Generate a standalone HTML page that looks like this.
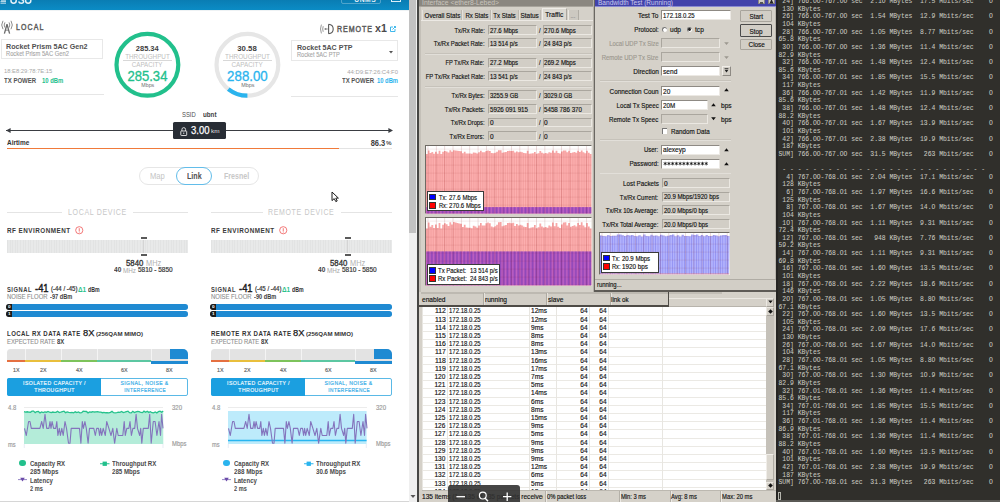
<!DOCTYPE html>
<html><head><meta charset="utf-8"><style>
html,body{margin:0;padding:0;}
body{width:1000px;height:502px;overflow:hidden;position:relative;background:#fff;font-family:"Liberation Sans", sans-serif;}
.t{position:absolute;white-space:pre;line-height:1;}
.r{position:absolute;}
svg.r{overflow:visible;}
</style></head><body>
<div class="r" style="left:0px;top:0px;width:409px;height:502px;background:#ffffff;"></div>
<div class="r" style="left:0px;top:0px;width:409px;height:10px;background:linear-gradient(180deg,#0a7db3 0%,#0b8cc5 100%);"></div>
<div class="r" style="left:0px;top:9.6px;width:409px;height:1.2px;background:#eef2f4;"></div>
<svg class="r" style="left:0;top:0" width="40" height="6" viewBox="0 0 40 6"><path d="M0.5 3.2 H6 M0.5 1.6 H6 M1 0.2 H6" stroke="#d8eaf4" stroke-width="0.9"/><path d="M11 -3 V0.8 Q11 3.2 13.6 3.2 Q16.2 3.2 16.2 0.8 V-3" stroke="#e4f1f8" stroke-width="1.5" fill="none"/><path d="M18.6 1.4 Q19.2 3.2 21.4 3.2 Q23.6 3.2 23.6 1.6 Q23.6 0.2 21.2 -0.6" stroke="#e4f1f8" stroke-width="1.5" fill="none"/><path d="M25.6 -3 V0.8 Q25.6 3.2 28.2 3.2 Q30.8 3.2 30.8 0.8 V-3" stroke="#e4f1f8" stroke-width="1.5" fill="none"/></svg>
<div class="r" style="left:341px;top:-6px;width:40px;height:10.3px;border:0.9px solid rgba(255,255,255,0.28);box-sizing:border-box;border-radius:2px;"></div>
<div class="t" style="left:352.57px;top:-3.78px;font-size:7.49px;color:#e0eef6;font-weight:700;letter-spacing:0.6px;transform:scale(0.8997,1.0000);transform-origin:50% 6.34px;">UNMS</div>
<div class="r" style="left:391px;top:-5px;width:10px;height:7px;border:1px solid #d9eef8;box-sizing:border-box;"></div>
<svg class="r" style="left:0px;top:16px" width="16" height="20" viewBox="0 16 16 20"><path d="M7 24.3 L4.4 33.6 M7 24.3 L9.6 33.6" stroke="#6a6a6a" stroke-width="1.3" fill="none"/><path d="M5.6 30.2 H8.4" stroke="#6a6a6a" stroke-width="0.8"/><path d="M3.0 20.8 Q0.4 25 3.0 29.2 M11.0 20.8 Q13.6 25 11.0 29.2" stroke="#808080" stroke-width="0.9" fill="none"/><path d="M4.9 22.4 Q3.5 25 4.9 27.6 M9.1 22.4 Q10.5 25 9.1 27.6" stroke="#808080" stroke-width="0.9" fill="none"/></svg>
<div class="t" style="left:16.00px;top:24.43px;font-size:8.196200000000001px;color:#5c5c5c;font-weight:400;letter-spacing:1.3px;transform:scale(0.8508,1.0000);transform-origin:0 6.94px;-webkit-text-stroke:0.45px #5c5c5c;">LOCAL</div>
<div class="r" style="left:0.6px;top:38.8px;width:102.9px;height:20.4px;border:1px solid #e8e8e8;box-sizing:border-box;"></div>
<div class="t" style="left:6.40px;top:42.95px;font-size:8.025px;color:#505050;font-weight:700;transform:scale(0.8881,1.0000);transform-origin:0 6.79px;">Rocket Prism 5AC Gen2</div>
<div class="t" style="left:6.40px;top:50.69px;font-size:6.955px;color:#a4a4a4;font-weight:400;transform:scale(0.8316,1.0000);transform-origin:0 5.89px;-webkit-text-stroke:0.1px #a4a4a4;">Rocket Prism 5AC Gen2</div>
<div class="t" style="left:4.40px;top:68.00px;font-size:6.099px;color:#a8a8a8;font-weight:400;transform:scale(0.9579,1.0000);transform-origin:0 5.16px;">18:E8:29:78:7E:15</div>
<div class="t" style="left:4.20px;top:77.71px;font-size:6.848000000000001px;color:#555;font-weight:700;transform:scale(0.8843,1.0000);transform-origin:0 5.80px;">TX POWER</div>
<div class="t" style="left:41.60px;top:77.71px;font-size:6.848000000000001px;color:#22c08c;font-weight:700;transform:scale(0.8651,1.0000);transform-origin:0 5.80px;">10 dBm</div>
<div class="r" style="left:0px;top:94px;width:103.5px;height:1px;background:#e6e6e6;"></div>
<svg class="r" style="left:110px;top:28px" width="80" height="74" viewBox="110 28 80 74"><circle cx="147.4" cy="64.8" r="30.9" stroke="#22c08c" stroke-width="4.2" fill="none"/></svg>
<div class="t" style="left:135.33px;top:45.25px;font-size:8.025px;color:#404040;font-weight:700;transform:scale(0.9289,1.0000);transform-origin:50% 6.79px;">285.34</div>
<div class="t" style="left:123.07px;top:53.89px;font-size:6.955px;color:#c0c0c0;font-weight:400;transform:scale(0.9130,1.0000);transform-origin:50% 5.89px;">THROUGHPUT</div>
<div class="r" style="left:122.5px;top:60.3px;width:49.5px;height:0.8px;background:#d8d8d8;"></div>
<div class="t" style="left:130.27px;top:61.89px;font-size:6.955px;color:#c0c0c0;font-weight:400;transform:scale(0.8959,1.0000);transform-origin:50% 5.89px;">CAPACITY</div>
<div class="t" style="left:126.29px;top:68.87px;font-size:14px;color:#22c08c;font-weight:400;transform:scale(0.9341,1.0000);transform-origin:50% 11.85px;-webkit-text-stroke:0.3px #22c08c;">285.34</div>
<div class="t" style="left:140.70px;top:82.67px;font-size:5.564000000000001px;color:#707070;font-weight:400;transform:scale(0.9555,1.0000);transform-origin:50% 4.71px;">Mbps</div>
<svg class="r" style="left:208px;top:28px" width="80" height="74" viewBox="208 28 80 74"><circle cx="247.4" cy="64.8" r="30.9" stroke="#e6e6e6" stroke-width="4.2" fill="none"/><path d="M247.40 95.70 A30.9 30.9 0 0 1 228.29 89.08" stroke="#2ab4ee" stroke-width="4.2" fill="none"/></svg>
<div class="t" style="left:237.26px;top:45.25px;font-size:8.025px;color:#404040;font-weight:700;transform:scale(0.9710,1.0000);transform-origin:50% 6.79px;">30.58</div>
<div class="t" style="left:222.87px;top:53.89px;font-size:6.955px;color:#c0c0c0;font-weight:400;transform:scale(0.9150,1.0000);transform-origin:50% 5.89px;">THROUGHPUT</div>
<div class="r" style="left:222.7px;top:60.3px;width:49.3px;height:0.8px;background:#d8d8d8;"></div>
<div class="t" style="left:230.07px;top:61.89px;font-size:6.955px;color:#c0c0c0;font-weight:400;transform:scale(0.9105,1.0000);transform-origin:50% 5.89px;">CAPACITY</div>
<div class="t" style="left:226.29px;top:68.87px;font-size:14px;color:#2ab4ee;font-weight:400;transform:scale(0.9481,1.0000);transform-origin:50% 11.85px;-webkit-text-stroke:0.3px #2ab4ee;">288.00</div>
<div class="t" style="left:240.60px;top:82.67px;font-size:5.564000000000001px;color:#707070;font-weight:400;transform:scale(0.9775,1.0000);transform-origin:50% 4.71px;">Mbps</div>
<svg class="r" style="left:319px;top:23px" width="16" height="12" viewBox="0 0 16 12"><path d="M2.4 1.6 Q0.6 6 2.4 10.4 M4.2 3.2 Q3.2 6 4.2 8.8" stroke="#808080" stroke-width="0.8" fill="none"/><circle cx="6.3" cy="6" r="0.8" fill="#555"/><path d="M6.5 6 H8.6" stroke="#666" stroke-width="0.9"/><path d="M9.6 1.2 V10.8 M9.6 1.2 Q14.2 1.6 14.2 6 Q14.2 10.4 9.6 10.8" stroke="#5a5a5a" stroke-width="1.1" fill="none"/></svg>
<div class="t" style="left:336.60px;top:25.93px;font-size:8.196200000000001px;color:#5c5c5c;font-weight:400;letter-spacing:1.1px;transform:scale(0.8641,1.0000);transform-origin:0 6.94px;-webkit-text-stroke:0.45px #5c5c5c;">REMOTE</div>
<div class="t" style="left:374.70px;top:22.56px;font-size:11px;color:#4a4a4a;font-weight:700;transform:scale(0.9644,1.0000);transform-origin:0 9.31px;">x1</div>
<svg class="r" style="left:390px;top:26px" width="6" height="6" viewBox="0 0 6 6"><path d="M4 0.5 H5.5 V2 M5.5 0.5 L2.5 3.5 M3 1 H0.5 V5.5 H5 V3" stroke="#2ab0ea" stroke-width="0.9" fill="none"/></svg>
<div class="r" style="left:291.4px;top:40px;width:107px;height:20.7px;border:1px solid #e8e8e8;box-sizing:border-box;"></div>
<div class="t" style="left:297.20px;top:44.15px;font-size:8.025px;color:#505050;font-weight:700;transform:scale(0.8826,1.0000);transform-origin:0 6.79px;">Rocket 5AC PTP</div>
<div class="t" style="left:297.20px;top:52.09px;font-size:6.955px;color:#a4a4a4;font-weight:400;transform:scale(0.8142,1.0000);transform-origin:0 5.89px;-webkit-text-stroke:0.1px #a4a4a4;">Rocket 5AC PTP</div>
<svg class="r" style="left:389px;top:50.5px" width="4" height="3" viewBox="0 0 4 3"><path d="M0 0 H4 L2 2.5Z" fill="#555"/></svg>
<div class="t" style="left:346.49px;top:68.90px;font-size:6.099px;color:#a8a8a8;font-weight:400;transform:scale(0.9768,1.0000);transform-origin:100% 5.16px;">44:D9:E7:26:C4:F0</div>
<div class="t" style="left:342.20px;top:78.21px;font-size:6.848000000000001px;color:#555;font-weight:700;transform:scale(0.8789,1.0000);transform-origin:0 5.80px;">TX POWER</div>
<div class="t" style="left:376.90px;top:78.21px;font-size:6.848000000000001px;color:#2ab4ee;font-weight:700;transform:scale(0.8530,1.0000);transform-origin:0 5.80px;">10 dBm</div>
<div class="r" style="left:291.4px;top:96px;width:107px;height:1px;background:#e6e6e6;"></div>
<div class="t" style="left:182.10px;top:112.26px;font-size:6.42px;color:#505050;font-weight:400;transform:scale(0.9209,1.0000);transform-origin:0 5.43px;">SSID</div>
<div class="t" style="left:202.80px;top:112.06px;font-size:6.42px;color:#404040;font-weight:700;transform:scale(0.9710,1.0000);transform-origin:0 5.43px;">ubnt</div>
<div class="r" style="left:6px;top:130px;width:386px;height:1.1px;background:#3a3d42;"></div>
<svg class="r" style="left:5.5px;top:128.3px" width="5" height="5" viewBox="0 0 5 5"><path d="M0 2.5 L4.6 0 L4.6 5Z" fill="#3a3d42"/></svg>
<svg class="r" style="left:388.3px;top:128.3px" width="5" height="5" viewBox="0 0 5 5"><path d="M5 2.5 L0.4 0 L0.4 5Z" fill="#3a3d42"/></svg>
<div class="r" style="left:172.5px;top:122.1px;width:53.5px;height:16.6px;background:#282d35;border-radius:1.5px;"></div>
<svg class="r" style="left:180px;top:126.5px" width="7.5" height="9" viewBox="0 0 7.5 9"><path d="M1.9 4 V2.6 Q1.9 0.6 3.75 0.6 Q5.6 0.6 5.6 2.6 V4" stroke="#e8e8e8" stroke-width="0.9" fill="none"/><rect x="0.8" y="4" width="5.9" height="4.5" rx="0.6" stroke="#e8e8e8" stroke-width="0.9" fill="none"/><path d="M3.75 5.5 V7" stroke="#e8e8e8" stroke-width="0.9"/></svg>
<div class="t" style="left:190.70px;top:125.03px;font-size:10.5px;color:#ffffff;font-weight:400;transform:scale(0.9101,1.0000);transform-origin:0 8.89px;-webkit-text-stroke:0.25px #fff;">3.00</div>
<div class="t" style="left:211.30px;top:128.73px;font-size:5.885000000000001px;color:#e0e0e0;font-weight:400;transform:scale(1.0835,1.0000);transform-origin:0 4.98px;">km</div>
<div class="t" style="left:7.00px;top:139.89px;font-size:6.955px;color:#333;font-weight:700;transform:scale(0.9306,1.0000);transform-origin:0 5.89px;">Airtime</div>
<div class="t" style="left:368.96px;top:138.71px;font-size:8.346px;color:#404040;font-weight:700;transform:scale(0.8988,1.0000);transform-origin:100% 7.06px;">86.3</div>
<div class="t" style="left:386.40px;top:140.87px;font-size:5.564000000000001px;color:#505050;font-weight:700;transform:scale(1.1320,1.0000);transform-origin:0 4.71px;">%</div>
<div class="r" style="left:7px;top:148px;width:385px;height:1.3px;background:#e3e3e3;"></div>
<div class="r" style="left:7px;top:147.8px;width:332px;height:1.6px;background:#f07a3a;"></div>
<div class="r" style="left:139.1px;top:167px;width:120.4px;height:17.9px;border:1px solid #e6e6e6;box-sizing:border-box;border-radius:9px;"></div>
<div class="r" style="left:176.2px;top:167.2px;width:35.7px;height:18px;border:1.3px solid #62bdea;box-sizing:border-box;border-radius:9px;"></div>
<div class="t" style="left:149.90px;top:172.38px;font-size:8.56px;color:#c4c4c4;font-weight:400;transform:scale(0.8888,1.0000);transform-origin:0 7.25px;">Map</div>
<div class="t" style="left:186.70px;top:172.38px;font-size:8.56px;color:#505050;font-weight:700;transform:scale(0.8354,1.0000);transform-origin:0 7.25px;">Link</div>
<div class="t" style="left:223.80px;top:172.38px;font-size:8.56px;color:#c8c8c8;font-weight:700;transform:scale(0.8276,1.0000);transform-origin:0 7.25px;">Fresnel</div>
<svg class="r" style="left:330.6px;top:191px" width="9" height="12" viewBox="0 0 9 12"><path d="M1 1 L1 9.6 L3.2 7.6 L4.8 10.6 L6.2 10 L4.8 7.1 L7.4 7.1 Z" fill="#fff" stroke="#1a1a1a" stroke-width="1.0" stroke-linejoin="round"/></svg>
<div class="r" style="left:6.9px;top:211.6px;width:55px;height:0.9px;background:#e4e4e4;"></div>
<div class="r" style="left:132.9px;top:211.6px;width:55px;height:0.9px;background:#e4e4e4;"></div>
<div class="t" style="left:67.50px;top:208.08px;font-size:8.56px;color:#c8c8c8;font-weight:400;letter-spacing:0.8px;transform:scale(0.8240,1.0000);transform-origin:0 7.25px;">LOCAL DEVICE</div>
<div class="t" style="left:6.90px;top:228.42px;font-size:6.7410000000000005px;color:#3a3a3a;font-weight:700;letter-spacing:0.5px;transform:scale(0.9398,1.0000);transform-origin:0 5.71px;">RF ENVIRONMENT</div>
<svg class="r" style="left:74.5px;top:226.4px" width="8.5" height="8.5" viewBox="0 0 8.5 8.5"><circle cx="4.25" cy="4.25" r="3.6" stroke="#f06a6a" stroke-width="0.9" fill="none"/><path d="M4.25 2.2 V5.6" stroke="#f06a6a" stroke-width="0.9"/><circle cx="4.25" cy="6.4" r="0.45" fill="#f06a6a"/></svg>
<div class="r" style="left:6.9px;top:239.7px;width:181.1px;height:13.1px;background:repeating-linear-gradient(90deg,#e2e3e3 0 1px,#e8e9e9 1px 2.6px);"></div>
<div class="r" style="left:143.4px;top:239.7px;width:0.8px;height:13.1px;background:#d4d4d4;"></div>
<div class="r" style="left:141px;top:237.2px;width:5.6px;height:1.8px;background:#5a5a5a;"></div>
<div class="r" style="left:141px;top:254.2px;width:5.6px;height:1.8px;background:#5a5a5a;"></div>
<div class="t" style="left:126.20px;top:258.78px;font-size:8.56px;color:#383838;font-weight:400;transform:scale(0.9085,1.0000);transform-origin:0 7.25px;-webkit-text-stroke:0.35px #383838;">5840</div>
<div class="t" style="left:145.60px;top:258.78px;font-size:8.56px;color:#b4b4b4;font-weight:400;transform:scale(0.8640,1.0000);transform-origin:0 7.25px;">MHz</div>
<div class="t" style="left:114.30px;top:267.23px;font-size:6.634px;color:#404040;font-weight:700;transform:scale(0.9893,1.0000);transform-origin:0 5.62px;">40</div>
<div class="t" style="left:123.00px;top:267.08px;font-size:7.062px;color:#a8a8a8;font-weight:400;transform:scale(0.8957,1.0000);transform-origin:0 5.98px;">MHz</div>
<div class="t" style="left:138.00px;top:267.21px;font-size:6.848000000000001px;color:#383838;font-weight:400;transform:scale(0.9520,1.0000);transform-origin:0 5.80px;-webkit-text-stroke:0.2px #383838;">5810 - 5850</div>
<div class="t" style="left:6.70px;top:286.81px;font-size:6.848000000000001px;color:#3e3e3e;font-weight:700;letter-spacing:0.6px;transform:scale(0.8483,1.0000);transform-origin:0 5.80px;">SIGNAL</div>
<div class="t" style="left:35.00px;top:282.84px;font-size:11.2px;color:#1c1c1c;font-weight:400;transform:scale(0.8401,1.0000);transform-origin:0 9.48px;-webkit-text-stroke:0.45px #1c1c1c;">-41</div>
<div class="t" style="left:50.50px;top:286.29px;font-size:6.955px;color:#333;font-weight:400;transform:scale(0.8679,1.0000);transform-origin:0 5.89px;-webkit-text-stroke:0.2px #333;">(-44 / -45)</div>
<div class="t" style="left:78.40px;top:286.61px;font-size:6.848000000000001px;color:#2bc28c;font-weight:700;transform:scale(0.9392,1.0000);transform-origin:0 5.80px;">Δ1</div>
<div class="t" style="left:88.00px;top:286.51px;font-size:6.848000000000001px;color:#303030;font-weight:700;transform:scale(0.7623,1.0000);transform-origin:0 5.80px;">dBm</div>
<div class="t" style="left:6.70px;top:294.23px;font-size:6.634px;color:#8e8e8e;font-weight:400;transform:scale(0.8955,1.0000);transform-origin:0 5.62px;-webkit-text-stroke:0.1px #8e8e8e;">NOISE FLOOR</div>
<div class="t" style="left:49.60px;top:294.23px;font-size:6.634px;color:#404040;font-weight:700;transform:scale(0.8520,1.0000);transform-origin:0 5.62px;">-97 dBm</div>
<div class="r" style="left:6.7px;top:304.2px;width:181.3px;height:5.5px;background:#1f8ad2;border-radius:2.75px;"></div>
<div class="r" style="left:6.4px;top:304.2px;width:5.8px;height:5.5px;background:#1c1c1c;border-radius:2.75px 0 0 2.75px;"></div>
<div class="t" style="left:8.10px;top:305.34px;font-size:4.28px;color:#ffffff;font-weight:700;transform:scale(1.0922,1.0000);transform-origin:0 3.62px;">0</div>
<div class="r" style="left:6.7px;top:311px;width:181.3px;height:5.5px;background:#1f8ad2;border-radius:2.75px;"></div>
<div class="r" style="left:6.4px;top:311px;width:5.8px;height:5.5px;background:#1c1c1c;border-radius:2.75px 0 0 2.75px;"></div>
<div class="t" style="left:8.10px;top:312.14px;font-size:4.28px;color:#ffffff;font-weight:700;transform:scale(1.0922,1.0000);transform-origin:0 3.62px;">1</div>
<div class="t" style="left:6.70px;top:331.22px;font-size:6.7410000000000005px;color:#333;font-weight:700;letter-spacing:0.5px;transform:scale(0.8944,1.0000);transform-origin:0 5.71px;">LOCAL RX DATA RATE</div>
<div class="t" style="left:82.80px;top:327.95px;font-size:9.6px;color:#181818;font-weight:400;transform:scale(0.9708,1.0000);transform-origin:0 8.13px;-webkit-text-stroke:0.25px #181818;">8X</div>
<div class="t" style="left:95.60px;top:330.82px;font-size:5.992px;color:#333;font-weight:700;transform:scale(1.0230,1.0000);transform-origin:0 5.07px;">(256QAM MIMO)</div>
<div class="t" style="left:6.70px;top:338.53px;font-size:6.634px;color:#8e8e8e;font-weight:400;transform:scale(0.8813,1.0000);transform-origin:0 5.62px;-webkit-text-stroke:0.1px #8e8e8e;">EXPECTED RATE</div>
<div class="t" style="left:57.00px;top:338.53px;font-size:6.634px;color:#404040;font-weight:700;transform:scale(0.8996,1.0000);transform-origin:0 5.62px;">8X</div>
<div class="r" style="left:6.7px;top:348.7px;width:181px;height:12.8px;background:#e3e3e3;border-radius:3.5px 5px 0 0;"></div>
<div class="r" style="left:24.7px;top:348.7px;width:0.8px;height:11.5px;background:#f4f4f4;"></div>
<div class="r" style="left:61.3px;top:348.7px;width:0.8px;height:11.5px;background:#f4f4f4;"></div>
<div class="r" style="left:97.2px;top:348.7px;width:0.8px;height:11.5px;background:#f4f4f4;"></div>
<div class="r" style="left:151.4px;top:348.7px;width:0.8px;height:11.5px;background:#f4f4f4;"></div>
<div class="r" style="left:169.7px;top:348.7px;width:18px;height:10.6px;background:#1f8ad2;border-radius:0 5px 0 0;"></div>
<div class="r" style="left:6.7px;top:360.2px;width:18px;height:1.6px;background:#e57040;"></div>
<div class="r" style="left:24.7px;top:360.2px;width:36.6px;height:1.6px;background:#e9bf3c;"></div>
<div class="r" style="left:61.3px;top:360.2px;width:35.9px;height:1.6px;background:#7dc35b;"></div>
<div class="r" style="left:97.2px;top:360.2px;width:54.2px;height:1.6px;background:#5cc7a2;"></div>
<div class="r" style="left:151.4px;top:360.6px;width:36.2px;height:3.3px;background:#1f8ad2;"></div>
<div class="t" style="left:12.70px;top:366.82px;font-size:5.992px;color:#606060;font-weight:400;transform:scale(0.9005,1.0000);transform-origin:0 5.07px;-webkit-text-stroke:0.15px #606060;">1X</div>
<div class="t" style="left:39.80px;top:366.82px;font-size:5.992px;color:#606060;font-weight:400;transform:scale(0.9005,1.0000);transform-origin:0 5.07px;-webkit-text-stroke:0.15px #606060;">2X</div>
<div class="t" style="left:76.10px;top:366.82px;font-size:5.992px;color:#606060;font-weight:400;transform:scale(0.9005,1.0000);transform-origin:0 5.07px;-webkit-text-stroke:0.15px #606060;">4X</div>
<div class="t" style="left:121.10px;top:366.82px;font-size:5.992px;color:#606060;font-weight:400;transform:scale(0.9005,1.0000);transform-origin:0 5.07px;-webkit-text-stroke:0.15px #606060;">6X</div>
<div class="t" style="left:166.20px;top:366.82px;font-size:5.992px;color:#606060;font-weight:400;transform:scale(0.9005,1.0000);transform-origin:0 5.07px;-webkit-text-stroke:0.15px #606060;">8X</div>
<div class="r" style="left:6.7px;top:377.5px;width:181px;height:18.3px;border:1px solid #5ab9e6;box-sizing:border-box;border-radius:2px;"></div>
<div class="r" style="left:6.7px;top:377.5px;width:94.8px;height:18.3px;background:#1b9fe0;border-radius:2px 0 0 2px;"></div>
<div class="t" style="left:17.95px;top:380.42px;font-size:5.992px;color:#e8f6fd;font-weight:400;letter-spacing:0.5px;transform:scale(0.8618,1.0000);transform-origin:50% 5.07px;-webkit-text-stroke:0.2px #e8f6fd;">ISOLATED CAPACITY /</div>
<div class="t" style="left:30.86px;top:387.32px;font-size:5.992px;color:#e8f6fd;font-weight:400;letter-spacing:0.5px;transform:scale(0.8588,1.0000);transform-origin:50% 5.07px;-webkit-text-stroke:0.2px #e8f6fd;">THROUGHPUT</div>
<div class="t" style="left:115.84px;top:380.42px;font-size:5.992px;color:#3aaee8;font-weight:400;letter-spacing:0.5px;transform:scale(0.8439,1.0000);transform-origin:50% 5.07px;-webkit-text-stroke:0.2px #3aaee8;">SIGNAL, NOISE &amp;</div>
<div class="t" style="left:118.90px;top:387.32px;font-size:5.992px;color:#3aaee8;font-weight:400;letter-spacing:0.5px;transform:scale(0.7964,1.0000);transform-origin:50% 5.07px;-webkit-text-stroke:0.2px #3aaee8;">INTERFERENCE</div>
<div class="t" style="left:7.80px;top:404.96px;font-size:6.42px;color:#999;font-weight:400;transform:scale(0.9188,1.0000);transform-origin:0 5.43px;-webkit-text-stroke:0.15px #999;">4.8</div>
<div class="t" style="left:8.40px;top:441.76px;font-size:6.42px;color:#999;font-weight:400;transform:scale(0.8880,1.0000);transform-origin:0 5.43px;-webkit-text-stroke:0.15px #999;">ms</div>
<div class="t" style="left:172.30px;top:404.96px;font-size:6.42px;color:#999;font-weight:400;transform:scale(0.9429,1.0000);transform-origin:0 5.43px;-webkit-text-stroke:0.15px #999;">320</div>
<div class="t" style="left:172.30px;top:441.36px;font-size:6.42px;color:#999;font-weight:400;transform:scale(0.9172,1.0000);transform-origin:0 5.43px;-webkit-text-stroke:0.15px #999;">Mbps</div>
<div class="r" style="left:24px;top:407.1px;width:139.3px;height:0.7px;background:#ececec;"></div>
<svg class="r" style="left:24px;top:405px" width="141" height="46" viewBox="0 0 141 46"><path d="M0 39 L0.0 6.53 L1.6 7.08 L3.2 6.77 L4.8 7.19 L6.4 7.23 L8.0 6.22 L9.6 6.12 L11.2 7.61 L12.8 6.57 L14.4 6.52 L16.0 7.89 L17.6 6.95 L19.2 7.61 L20.8 6.96 L22.4 7.25 L24.0 6.37 L25.6 7.24 L27.2 7.66 L28.8 7.04 L30.4 7.43 L32.0 7.31 L33.6 6.22 L35.2 7.46 L36.8 7.16 L38.4 6.64 L40.0 6.16 L41.6 7.66 L43.2 6.95 L44.8 7.39 L46.4 7.68 L48.0 7.39 L49.6 7.76 L51.2 6.81 L52.8 7.54 L54.4 6.90 L56.0 7.78 L57.6 7.68 L59.2 6.28 L60.8 6.34 L62.4 6.49 L64.0 7.84 L65.6 6.89 L67.2 7.23 L68.8 6.64 L70.4 7.01 L72.0 6.79 L73.6 6.73 L75.2 7.15 L76.8 7.15 L78.4 7.73 L80.0 7.33 L81.6 7.77 L83.2 7.64 L84.8 7.88 L86.4 7.31 L88.0 6.39 L89.6 7.65 L91.2 7.84 L92.8 7.73 L94.4 7.12 L96.0 7.38 L97.6 6.48 L99.2 7.60 L100.8 7.13 L102.4 6.61 L104.0 6.21 L105.6 7.64 L107.2 7.88 L108.8 6.26 L110.4 7.54 L112.0 6.84 L113.6 6.37 L115.2 6.63 L116.8 7.48 L118.4 7.67 L120.0 6.18 L121.6 7.21 L123.2 6.18 L124.8 7.39 L126.4 6.70 L128.0 7.69 L129.6 7.87 L131.2 7.01 L132.8 7.90 L134.4 6.66 L136.0 6.24 L137.6 7.18 L139.2 6.16 L139.3 39 Z" fill="#b4ecd9"/><path d="M0.0 6.53 L1.6 7.08 L3.2 6.77 L4.8 7.19 L6.4 7.23 L8.0 6.22 L9.6 6.12 L11.2 7.61 L12.8 6.57 L14.4 6.52 L16.0 7.89 L17.6 6.95 L19.2 7.61 L20.8 6.96 L22.4 7.25 L24.0 6.37 L25.6 7.24 L27.2 7.66 L28.8 7.04 L30.4 7.43 L32.0 7.31 L33.6 6.22 L35.2 7.46 L36.8 7.16 L38.4 6.64 L40.0 6.16 L41.6 7.66 L43.2 6.95 L44.8 7.39 L46.4 7.68 L48.0 7.39 L49.6 7.76 L51.2 6.81 L52.8 7.54 L54.4 6.90 L56.0 7.78 L57.6 7.68 L59.2 6.28 L60.8 6.34 L62.4 6.49 L64.0 7.84 L65.6 6.89 L67.2 7.23 L68.8 6.64 L70.4 7.01 L72.0 6.79 L73.6 6.73 L75.2 7.15 L76.8 7.15 L78.4 7.73 L80.0 7.33 L81.6 7.77 L83.2 7.64 L84.8 7.88 L86.4 7.31 L88.0 6.39 L89.6 7.65 L91.2 7.84 L92.8 7.73 L94.4 7.12 L96.0 7.38 L97.6 6.48 L99.2 7.60 L100.8 7.13 L102.4 6.61 L104.0 6.21 L105.6 7.64 L107.2 7.88 L108.8 6.26 L110.4 7.54 L112.0 6.84 L113.6 6.37 L115.2 6.63 L116.8 7.48 L118.4 7.67 L120.0 6.18 L121.6 7.21 L123.2 6.18 L124.8 7.39 L126.4 6.70 L128.0 7.69 L129.6 7.87 L131.2 7.01 L132.8 7.90 L134.4 6.66 L136.0 6.24 L137.6 7.18 L139.2 6.16" stroke="#25c28c" stroke-width="1.3" fill="none"/><path d="M0.5 23.4 L2.3 30.5 L4.6 16.5 L6.0 16.5 L7.3 23.4 L15.9 23.4 L17.7 16.5 L19.2 23.4 L21.0 9.2 L22.7 23.4 L24.9 23.4 L26.0 16.5 L27.0 23.4 L28.1 16.5 L29.6 23.4 L31.7 23.4 L32.8 16.5 L33.9 30.5 L35.3 23.4 L36.4 30.5 L37.8 23.4 L39.2 30.5 L41.0 16.5 L42.5 23.4 L44.5 38.3 L46.0 38.3 L47.2 23.4 L55.5 23.4 L56.9 38.3 L58.3 16.5 L59.4 23.4 L60.9 16.5 L62.3 23.4 L64.1 38.3 L65.5 23.4 L69.8 23.4 L71.3 30.5 L72.7 23.4 L74.5 23.4 L75.6 30.5 L76.6 23.4 L77.7 30.5 L79.2 23.4 L81.3 30.5 L82.7 16.5 L84.9 23.4 L87.0 30.5 L88.8 23.4 L90.6 38.3 L92.8 23.4 L94.2 30.5 L98.8 30.5 L100.2 16.5 L101.3 30.5 L102.8 23.4 L104.9 23.4 L106.0 16.5 L107.4 30.5 L108.9 23.4 L110.7 23.4 L112.1 9.2 L113.5 23.4 L115.7 30.5 L116.7 23.4 L117.8 38.3 L119.3 23.4 L124.3 23.4 L125.7 9.2 L127.2 38.3 L129.3 16.5 L131.1 16.5 L132.9 30.5 L135.0 16.5 L136.5 30.5 L137.6 9.2 L139.0 23.4" stroke="#8474bd" stroke-width="1.1" fill="none" stroke-linejoin="round"/><path d="M0.3 39 V43" stroke="#e0e4f0" stroke-width="0.7"/><path d="M139.0 39 V43" stroke="#e0e4f0" stroke-width="0.7"/></svg>
<div class="r" style="left:19.3px;top:459.9px;width:6.6px;height:6.6px;border-radius:50%;background:#22c08c"></div>
<div class="t" style="left:30.00px;top:460.86px;font-size:7.1690000000000005px;color:#4a4a4a;font-weight:700;transform:scale(0.8414,1.0000);transform-origin:0 6.07px;">Capacity RX</div>
<div class="t" style="left:30.00px;top:468.86px;font-size:7.1690000000000005px;color:#4a4a4a;font-weight:700;transform:scale(0.8723,1.0000);transform-origin:0 6.07px;">285 Mbps</div>
<svg class="r" style="left:99.9px;top:461px" width="9.5" height="5.5" viewBox="0 0 9.5 5.5"><path d="M0 2.75 H9.5" stroke="#22c08c" stroke-width="1"/><rect x="2.6" y="0.6" width="4.3" height="4.3" fill="#22c08c"/></svg>
<div class="t" style="left:112.00px;top:460.86px;font-size:7.1690000000000005px;color:#4a4a4a;font-weight:700;transform:scale(0.8512,1.0000);transform-origin:0 6.07px;">Throughput RX</div>
<div class="t" style="left:112.00px;top:468.86px;font-size:7.1690000000000005px;color:#4a4a4a;font-weight:700;transform:scale(0.8570,1.0000);transform-origin:0 6.07px;">285 Mbps</div>
<svg class="r" style="left:18.3px;top:477px" width="9" height="5.5" viewBox="0 0 9 5.5"><path d="M0 2.6 H9" stroke="#8a78c0" stroke-width="0.9"/><path d="M2.2 0.8 H6.8 L4.5 4.6Z" fill="#6a4aa8"/></svg>
<div class="t" style="left:30.00px;top:477.66px;font-size:7.1690000000000005px;color:#4a4a4a;font-weight:700;transform:scale(0.8452,1.0000);transform-origin:0 6.07px;">Latency</div>
<div class="t" style="left:30.00px;top:485.66px;font-size:7.1690000000000005px;color:#4a4a4a;font-weight:700;transform:scale(0.7833,1.0000);transform-origin:0 6.07px;">2 ms</div>
<div class="r" style="left:211px;top:211.6px;width:51.7px;height:0.9px;background:#e4e4e4;"></div>
<div class="r" style="left:340.8px;top:211.6px;width:51px;height:0.9px;background:#e4e4e4;"></div>
<div class="t" style="left:268.00px;top:208.08px;font-size:8.56px;color:#c8c8c8;font-weight:400;letter-spacing:0.8px;transform:scale(0.8183,1.0000);transform-origin:0 7.25px;">REMOTE DEVICE</div>
<div class="t" style="left:210.90px;top:228.42px;font-size:6.7410000000000005px;color:#3a3a3a;font-weight:700;letter-spacing:0.5px;transform:scale(0.9398,1.0000);transform-origin:0 5.71px;">RF ENVIRONMENT</div>
<svg class="r" style="left:278.5px;top:226.4px" width="8.5" height="8.5" viewBox="0 0 8.5 8.5"><circle cx="4.25" cy="4.25" r="3.6" stroke="#f06a6a" stroke-width="0.9" fill="none"/><path d="M4.25 2.2 V5.6" stroke="#f06a6a" stroke-width="0.9"/><circle cx="4.25" cy="6.4" r="0.45" fill="#f06a6a"/></svg>
<div class="r" style="left:210.9px;top:239.7px;width:181.1px;height:13.1px;background:repeating-linear-gradient(90deg,#e2e3e3 0 1px,#e8e9e9 1px 2.6px);"></div>
<div class="r" style="left:347.4px;top:239.7px;width:0.8px;height:13.1px;background:#d4d4d4;"></div>
<div class="r" style="left:345px;top:237.2px;width:5.6px;height:1.8px;background:#5a5a5a;"></div>
<div class="r" style="left:345px;top:254.2px;width:5.6px;height:1.8px;background:#5a5a5a;"></div>
<div class="t" style="left:330.20px;top:258.78px;font-size:8.56px;color:#383838;font-weight:400;transform:scale(0.9085,1.0000);transform-origin:0 7.25px;-webkit-text-stroke:0.35px #383838;">5840</div>
<div class="t" style="left:349.60px;top:258.78px;font-size:8.56px;color:#b4b4b4;font-weight:400;transform:scale(0.8640,1.0000);transform-origin:0 7.25px;">MHz</div>
<div class="t" style="left:318.30px;top:267.23px;font-size:6.634px;color:#404040;font-weight:700;transform:scale(0.9893,1.0000);transform-origin:0 5.62px;">40</div>
<div class="t" style="left:327.00px;top:267.08px;font-size:7.062px;color:#a8a8a8;font-weight:400;transform:scale(0.8957,1.0000);transform-origin:0 5.98px;">MHz</div>
<div class="t" style="left:342.00px;top:267.21px;font-size:6.848000000000001px;color:#383838;font-weight:400;transform:scale(0.9520,1.0000);transform-origin:0 5.80px;-webkit-text-stroke:0.2px #383838;">5810 - 5850</div>
<div class="t" style="left:210.70px;top:286.81px;font-size:6.848000000000001px;color:#3e3e3e;font-weight:700;letter-spacing:0.6px;transform:scale(0.8483,1.0000);transform-origin:0 5.80px;">SIGNAL</div>
<div class="t" style="left:239.00px;top:282.84px;font-size:11.2px;color:#1c1c1c;font-weight:400;transform:scale(0.8401,1.0000);transform-origin:0 9.48px;-webkit-text-stroke:0.45px #1c1c1c;">-41</div>
<div class="t" style="left:254.50px;top:286.29px;font-size:6.955px;color:#333;font-weight:400;transform:scale(0.8679,1.0000);transform-origin:0 5.89px;-webkit-text-stroke:0.2px #333;">(-45 / -44)</div>
<div class="t" style="left:282.40px;top:286.61px;font-size:6.848000000000001px;color:#2bc28c;font-weight:700;transform:scale(0.9392,1.0000);transform-origin:0 5.80px;">Δ1</div>
<div class="t" style="left:292.00px;top:286.51px;font-size:6.848000000000001px;color:#303030;font-weight:700;transform:scale(0.7623,1.0000);transform-origin:0 5.80px;">dBm</div>
<div class="t" style="left:210.70px;top:294.23px;font-size:6.634px;color:#8e8e8e;font-weight:400;transform:scale(0.8955,1.0000);transform-origin:0 5.62px;-webkit-text-stroke:0.1px #8e8e8e;">NOISE FLOOR</div>
<div class="t" style="left:253.60px;top:294.23px;font-size:6.634px;color:#404040;font-weight:700;transform:scale(0.8520,1.0000);transform-origin:0 5.62px;">-90 dBm</div>
<div class="r" style="left:210.7px;top:304.2px;width:181.3px;height:5.5px;background:#1f8ad2;border-radius:2.75px;"></div>
<div class="r" style="left:210.4px;top:304.2px;width:5.8px;height:5.5px;background:#1c1c1c;border-radius:2.75px 0 0 2.75px;"></div>
<div class="t" style="left:212.10px;top:305.34px;font-size:4.28px;color:#ffffff;font-weight:700;transform:scale(1.0922,1.0000);transform-origin:0 3.62px;">0</div>
<div class="r" style="left:210.7px;top:311px;width:181.3px;height:5.5px;background:#1f8ad2;border-radius:2.75px;"></div>
<div class="r" style="left:210.4px;top:311px;width:5.8px;height:5.5px;background:#1c1c1c;border-radius:2.75px 0 0 2.75px;"></div>
<div class="t" style="left:212.10px;top:312.14px;font-size:4.28px;color:#ffffff;font-weight:700;transform:scale(1.0922,1.0000);transform-origin:0 3.62px;">1</div>
<div class="t" style="left:210.70px;top:331.22px;font-size:6.7410000000000005px;color:#333;font-weight:700;letter-spacing:0.5px;transform:scale(0.9081,1.0000);transform-origin:0 5.71px;">REMOTE RX DATA RATE</div>
<div class="t" style="left:293.20px;top:327.95px;font-size:9.6px;color:#181818;font-weight:400;transform:scale(0.9708,1.0000);transform-origin:0 8.13px;-webkit-text-stroke:0.25px #181818;">8X</div>
<div class="t" style="left:306.00px;top:330.82px;font-size:5.992px;color:#333;font-weight:700;transform:scale(1.0230,1.0000);transform-origin:0 5.07px;">(256QAM MIMO)</div>
<div class="t" style="left:210.70px;top:338.53px;font-size:6.634px;color:#8e8e8e;font-weight:400;transform:scale(0.8813,1.0000);transform-origin:0 5.62px;-webkit-text-stroke:0.1px #8e8e8e;">EXPECTED RATE</div>
<div class="t" style="left:261.00px;top:338.53px;font-size:6.634px;color:#404040;font-weight:700;transform:scale(0.8996,1.0000);transform-origin:0 5.62px;">8X</div>
<div class="r" style="left:210.7px;top:348.7px;width:181px;height:12.8px;background:#e3e3e3;border-radius:3.5px 5px 0 0;"></div>
<div class="r" style="left:228.7px;top:348.7px;width:0.8px;height:11.5px;background:#f4f4f4;"></div>
<div class="r" style="left:265.3px;top:348.7px;width:0.8px;height:11.5px;background:#f4f4f4;"></div>
<div class="r" style="left:301.2px;top:348.7px;width:0.8px;height:11.5px;background:#f4f4f4;"></div>
<div class="r" style="left:355.4px;top:348.7px;width:0.8px;height:11.5px;background:#f4f4f4;"></div>
<div class="r" style="left:373.7px;top:348.7px;width:18px;height:10.6px;background:#1f8ad2;border-radius:0 5px 0 0;"></div>
<div class="r" style="left:210.7px;top:360.2px;width:18px;height:1.6px;background:#e57040;"></div>
<div class="r" style="left:228.7px;top:360.2px;width:36.6px;height:1.6px;background:#e9bf3c;"></div>
<div class="r" style="left:265.3px;top:360.2px;width:35.9px;height:1.6px;background:#7dc35b;"></div>
<div class="r" style="left:301.2px;top:360.2px;width:54.2px;height:1.6px;background:#5cc7a2;"></div>
<div class="r" style="left:355.4px;top:360.6px;width:36.2px;height:3.3px;background:#1f8ad2;"></div>
<div class="t" style="left:216.70px;top:366.82px;font-size:5.992px;color:#606060;font-weight:400;transform:scale(0.9005,1.0000);transform-origin:0 5.07px;-webkit-text-stroke:0.15px #606060;">1X</div>
<div class="t" style="left:243.80px;top:366.82px;font-size:5.992px;color:#606060;font-weight:400;transform:scale(0.9005,1.0000);transform-origin:0 5.07px;-webkit-text-stroke:0.15px #606060;">2X</div>
<div class="t" style="left:280.10px;top:366.82px;font-size:5.992px;color:#606060;font-weight:400;transform:scale(0.9005,1.0000);transform-origin:0 5.07px;-webkit-text-stroke:0.15px #606060;">4X</div>
<div class="t" style="left:325.10px;top:366.82px;font-size:5.992px;color:#606060;font-weight:400;transform:scale(0.9005,1.0000);transform-origin:0 5.07px;-webkit-text-stroke:0.15px #606060;">6X</div>
<div class="t" style="left:370.20px;top:366.82px;font-size:5.992px;color:#606060;font-weight:400;transform:scale(0.9005,1.0000);transform-origin:0 5.07px;-webkit-text-stroke:0.15px #606060;">8X</div>
<div class="r" style="left:210.7px;top:377.5px;width:181px;height:18.3px;border:1px solid #5ab9e6;box-sizing:border-box;border-radius:2px;"></div>
<div class="r" style="left:210.7px;top:377.5px;width:94.8px;height:18.3px;background:#1b9fe0;border-radius:2px 0 0 2px;"></div>
<div class="t" style="left:221.95px;top:380.42px;font-size:5.992px;color:#e8f6fd;font-weight:400;letter-spacing:0.5px;transform:scale(0.8618,1.0000);transform-origin:50% 5.07px;-webkit-text-stroke:0.2px #e8f6fd;">ISOLATED CAPACITY /</div>
<div class="t" style="left:234.86px;top:387.32px;font-size:5.992px;color:#e8f6fd;font-weight:400;letter-spacing:0.5px;transform:scale(0.8588,1.0000);transform-origin:50% 5.07px;-webkit-text-stroke:0.2px #e8f6fd;">THROUGHPUT</div>
<div class="t" style="left:319.84px;top:380.42px;font-size:5.992px;color:#3aaee8;font-weight:400;letter-spacing:0.5px;transform:scale(0.8439,1.0000);transform-origin:50% 5.07px;-webkit-text-stroke:0.2px #3aaee8;">SIGNAL, NOISE &amp;</div>
<div class="t" style="left:322.90px;top:387.32px;font-size:5.992px;color:#3aaee8;font-weight:400;letter-spacing:0.5px;transform:scale(0.7964,1.0000);transform-origin:50% 5.07px;-webkit-text-stroke:0.2px #3aaee8;">INTERFERENCE</div>
<div class="t" style="left:211.80px;top:404.96px;font-size:6.42px;color:#999;font-weight:400;transform:scale(0.9188,1.0000);transform-origin:0 5.43px;-webkit-text-stroke:0.15px #999;">4.8</div>
<div class="t" style="left:212.40px;top:441.76px;font-size:6.42px;color:#999;font-weight:400;transform:scale(0.8880,1.0000);transform-origin:0 5.43px;-webkit-text-stroke:0.15px #999;">ms</div>
<div class="t" style="left:376.30px;top:404.96px;font-size:6.42px;color:#999;font-weight:400;transform:scale(0.9429,1.0000);transform-origin:0 5.43px;-webkit-text-stroke:0.15px #999;">320</div>
<div class="t" style="left:376.30px;top:441.36px;font-size:6.42px;color:#999;font-weight:400;transform:scale(0.9172,1.0000);transform-origin:0 5.43px;-webkit-text-stroke:0.15px #999;">Mbps</div>
<div class="r" style="left:228px;top:407.1px;width:139.3px;height:0.7px;background:#ececec;"></div>
<svg class="r" style="left:228px;top:405px" width="141" height="46" viewBox="0 0 141 46"><rect x="0" y="6" width="138.6" height="33" fill="#bdebfb"/><path d="M0 35.6 H138.6" stroke="#28b5f0" stroke-width="1.5"/><path d="M0.5 23.4 L2.3 30.5 L4.6 16.5 L6.0 16.5 L7.3 23.4 L15.9 23.4 L17.7 16.5 L19.2 23.4 L21.0 9.2 L22.7 23.4 L24.9 23.4 L26.0 16.5 L27.0 23.4 L28.1 16.5 L29.6 23.4 L31.7 23.4 L32.8 16.5 L33.9 30.5 L35.3 23.4 L36.4 30.5 L37.8 23.4 L39.2 30.5 L41.0 16.5 L42.5 23.4 L44.5 38.3 L46.0 38.3 L47.2 23.4 L55.5 23.4 L56.9 38.3 L58.3 16.5 L59.4 23.4 L60.9 16.5 L62.3 23.4 L64.1 38.3 L65.5 23.4 L69.8 23.4 L71.3 30.5 L72.7 23.4 L74.5 23.4 L75.6 30.5 L76.6 23.4 L77.7 30.5 L79.2 23.4 L81.3 30.5 L82.7 16.5 L84.9 23.4 L87.0 30.5 L88.8 23.4 L90.6 38.3 L92.8 23.4 L94.2 30.5 L98.8 30.5 L100.2 16.5 L101.3 30.5 L102.8 23.4 L104.9 23.4 L106.0 16.5 L107.4 30.5 L108.9 23.4 L110.7 23.4 L112.1 9.2 L113.5 23.4 L115.7 30.5 L116.7 23.4 L117.8 38.3 L119.3 23.4 L124.3 23.4 L125.7 9.2 L127.2 38.3 L129.3 16.5 L131.1 16.5 L132.9 30.5 L135.0 16.5 L136.5 30.5 L137.6 9.2 L139.0 23.4" stroke="#8474bd" stroke-width="1.1" fill="none" stroke-linejoin="round"/><path d="M0.3 39 V43" stroke="#e0e4f0" stroke-width="0.7"/><path d="M138.3 39 V43" stroke="#e0e4f0" stroke-width="0.7"/></svg>
<div class="r" style="left:223.3px;top:459.9px;width:6.6px;height:6.6px;border-radius:50%;background:#2ab4ee"></div>
<div class="t" style="left:234.00px;top:460.86px;font-size:7.1690000000000005px;color:#4a4a4a;font-weight:700;transform:scale(0.8414,1.0000);transform-origin:0 6.07px;">Capacity RX</div>
<div class="t" style="left:234.00px;top:468.86px;font-size:7.1690000000000005px;color:#4a4a4a;font-weight:700;transform:scale(0.8723,1.0000);transform-origin:0 6.07px;">288 Mbps</div>
<svg class="r" style="left:303.9px;top:461px" width="9.5" height="5.5" viewBox="0 0 9.5 5.5"><path d="M0 2.75 H9.5" stroke="#2ab4ee" stroke-width="1"/><rect x="2.6" y="0.6" width="4.3" height="4.3" fill="#2ab4ee"/></svg>
<div class="t" style="left:316.00px;top:460.86px;font-size:7.1690000000000005px;color:#4a4a4a;font-weight:700;transform:scale(0.8512,1.0000);transform-origin:0 6.07px;">Throughput RX</div>
<div class="t" style="left:316.00px;top:468.86px;font-size:7.1690000000000005px;color:#4a4a4a;font-weight:700;transform:scale(0.8655,1.0000);transform-origin:0 6.07px;">30.6 Mbps</div>
<svg class="r" style="left:222.3px;top:477px" width="9" height="5.5" viewBox="0 0 9 5.5"><path d="M0 2.6 H9" stroke="#8a78c0" stroke-width="0.9"/><path d="M2.2 0.8 H6.8 L4.5 4.6Z" fill="#6a4aa8"/></svg>
<div class="t" style="left:234.00px;top:477.66px;font-size:7.1690000000000005px;color:#4a4a4a;font-weight:700;transform:scale(0.8452,1.0000);transform-origin:0 6.07px;">Latency</div>
<div class="t" style="left:234.00px;top:485.66px;font-size:7.1690000000000005px;color:#4a4a4a;font-weight:700;transform:scale(0.7833,1.0000);transform-origin:0 6.07px;">2 ms</div>
<div class="r" style="left:409px;top:0px;width:8.5px;height:502px;background:#efefef;"></div>
<div class="r" style="left:409.3px;top:0px;width:6.4px;height:233px;background:#c2c2c2;"></div>
<div class="r" style="left:416.8px;top:0px;width:2.8px;height:502px;background:#464644;"></div>
<svg class="r" style="left:410px;top:494px" width="6" height="5" viewBox="0 0 6 5"><path d="M0.5 1 H5.5 L3 4Z" fill="#555"/></svg>
<div class="r" style="left:0px;top:500.6px;width:409px;height:1.4px;background:#d6d6d6;"></div>
<div class="r" style="left:419.4px;top:0px;width:357px;height:502px;background:#d5d1c9;"></div>
<div class="r" style="left:421.5px;top:306.6px;width:344.7px;height:183.4px;background:#ffffff;"></div>
<div class="r" style="left:421.5px;top:314.5px;width:344.7px;height:0.8px;background:#ebe9e4;"></div>
<div class="r" style="left:421.5px;top:322.7px;width:344.7px;height:0.8px;background:#ebe9e4;"></div>
<div class="r" style="left:421.5px;top:330.9px;width:344.7px;height:0.8px;background:#ebe9e4;"></div>
<div class="r" style="left:421.5px;top:339.1px;width:344.7px;height:0.8px;background:#ebe9e4;"></div>
<div class="r" style="left:421.5px;top:347.3px;width:344.7px;height:0.8px;background:#ebe9e4;"></div>
<div class="r" style="left:421.5px;top:355.5px;width:344.7px;height:0.8px;background:#ebe9e4;"></div>
<div class="r" style="left:421.5px;top:363.7px;width:344.7px;height:0.8px;background:#ebe9e4;"></div>
<div class="r" style="left:421.5px;top:371.9px;width:344.7px;height:0.8px;background:#ebe9e4;"></div>
<div class="r" style="left:421.5px;top:380.1px;width:344.7px;height:0.8px;background:#ebe9e4;"></div>
<div class="r" style="left:421.5px;top:388.3px;width:344.7px;height:0.8px;background:#ebe9e4;"></div>
<div class="r" style="left:421.5px;top:396.5px;width:344.7px;height:0.8px;background:#ebe9e4;"></div>
<div class="r" style="left:421.5px;top:404.7px;width:344.7px;height:0.8px;background:#ebe9e4;"></div>
<div class="r" style="left:421.5px;top:412.9px;width:344.7px;height:0.8px;background:#ebe9e4;"></div>
<div class="r" style="left:421.5px;top:421.1px;width:344.7px;height:0.8px;background:#ebe9e4;"></div>
<div class="r" style="left:421.5px;top:429.29999999999995px;width:344.7px;height:0.8px;background:#ebe9e4;"></div>
<div class="r" style="left:421.5px;top:437.5px;width:344.7px;height:0.8px;background:#ebe9e4;"></div>
<div class="r" style="left:421.5px;top:445.7px;width:344.7px;height:0.8px;background:#ebe9e4;"></div>
<div class="r" style="left:421.5px;top:453.9px;width:344.7px;height:0.8px;background:#ebe9e4;"></div>
<div class="r" style="left:421.5px;top:462.1px;width:344.7px;height:0.8px;background:#ebe9e4;"></div>
<div class="r" style="left:421.5px;top:470.29999999999995px;width:344.7px;height:0.8px;background:#ebe9e4;"></div>
<div class="r" style="left:421.5px;top:478.5px;width:344.7px;height:0.8px;background:#ebe9e4;"></div>
<div class="r" style="left:421.5px;top:486.7px;width:344.7px;height:0.8px;background:#ebe9e4;"></div>
<div class="r" style="left:422.2px;top:306.6px;width:0.7px;height:183.4px;background:#e8e6e1;"></div>
<div class="r" style="left:446.8px;top:306.6px;width:0.7px;height:183.4px;background:#e8e6e1;"></div>
<div class="r" style="left:528.8px;top:306.6px;width:0.7px;height:183.4px;background:#e8e6e1;"></div>
<div class="r" style="left:555.8px;top:306.6px;width:0.7px;height:183.4px;background:#e8e6e1;"></div>
<div class="r" style="left:588.8px;top:306.6px;width:0.7px;height:183.4px;background:#e8e6e1;"></div>
<div class="r" style="left:607.6px;top:306.6px;width:0.7px;height:183.4px;background:#e8e6e1;"></div>
<div class="r" style="left:662.4px;top:306.6px;width:0.7px;height:183.4px;background:#e8e6e1;"></div>
<div class="t" style="left:434.76px;top:308.38px;font-size:6.8px;color:#111111;font-weight:400;transform:scale(1.0047,1.0000);transform-origin:100% 5.76px;-webkit-text-stroke:0.15px #111111;">112</div>
<div class="t" style="left:448.60px;top:308.38px;font-size:6.8px;color:#111111;font-weight:400;transform:scale(0.8795,1.0000);transform-origin:0 5.76px;-webkit-text-stroke:0.15px #111111;">172.18.0.25</div>
<div class="t" style="left:530.60px;top:308.38px;font-size:6.8px;color:#111111;font-weight:400;transform:scale(0.9655,1.0000);transform-origin:0 5.76px;-webkit-text-stroke:0.15px #111111;">12ms</div>
<div class="t" style="left:579.84px;top:308.38px;font-size:6.8px;color:#111111;font-weight:400;transform:scale(0.9600,1.0000);transform-origin:100% 5.76px;-webkit-text-stroke:0.15px #111111;">64</div>
<div class="t" style="left:598.64px;top:308.38px;font-size:6.8px;color:#111111;font-weight:400;transform:scale(0.9600,1.0000);transform-origin:100% 5.76px;-webkit-text-stroke:0.15px #111111;">64</div>
<div class="t" style="left:434.76px;top:316.58px;font-size:6.8px;color:#111111;font-weight:400;transform:scale(1.0047,1.0000);transform-origin:100% 5.76px;-webkit-text-stroke:0.15px #111111;">113</div>
<div class="t" style="left:448.60px;top:316.58px;font-size:6.8px;color:#111111;font-weight:400;transform:scale(0.8795,1.0000);transform-origin:0 5.76px;-webkit-text-stroke:0.15px #111111;">172.18.0.25</div>
<div class="t" style="left:530.60px;top:316.58px;font-size:6.8px;color:#111111;font-weight:400;transform:scale(0.9655,1.0000);transform-origin:0 5.76px;-webkit-text-stroke:0.15px #111111;">12ms</div>
<div class="t" style="left:579.84px;top:316.58px;font-size:6.8px;color:#111111;font-weight:400;transform:scale(0.9600,1.0000);transform-origin:100% 5.76px;-webkit-text-stroke:0.15px #111111;">64</div>
<div class="t" style="left:598.64px;top:316.58px;font-size:6.8px;color:#111111;font-weight:400;transform:scale(0.9600,1.0000);transform-origin:100% 5.76px;-webkit-text-stroke:0.15px #111111;">64</div>
<div class="t" style="left:434.76px;top:324.78px;font-size:6.8px;color:#111111;font-weight:400;transform:scale(1.0047,1.0000);transform-origin:100% 5.76px;-webkit-text-stroke:0.15px #111111;">114</div>
<div class="t" style="left:448.60px;top:324.78px;font-size:6.8px;color:#111111;font-weight:400;transform:scale(0.8795,1.0000);transform-origin:0 5.76px;-webkit-text-stroke:0.15px #111111;">172.18.0.25</div>
<div class="t" style="left:530.60px;top:324.78px;font-size:6.8px;color:#111111;font-weight:400;transform:scale(0.9671,1.0000);transform-origin:0 5.76px;-webkit-text-stroke:0.15px #111111;">9ms</div>
<div class="t" style="left:579.84px;top:324.78px;font-size:6.8px;color:#111111;font-weight:400;transform:scale(0.9600,1.0000);transform-origin:100% 5.76px;-webkit-text-stroke:0.15px #111111;">64</div>
<div class="t" style="left:598.64px;top:324.78px;font-size:6.8px;color:#111111;font-weight:400;transform:scale(0.9600,1.0000);transform-origin:100% 5.76px;-webkit-text-stroke:0.15px #111111;">64</div>
<div class="t" style="left:434.76px;top:332.98px;font-size:6.8px;color:#111111;font-weight:400;transform:scale(1.0047,1.0000);transform-origin:100% 5.76px;-webkit-text-stroke:0.15px #111111;">115</div>
<div class="t" style="left:448.60px;top:332.98px;font-size:6.8px;color:#111111;font-weight:400;transform:scale(0.8795,1.0000);transform-origin:0 5.76px;-webkit-text-stroke:0.15px #111111;">172.18.0.25</div>
<div class="t" style="left:530.60px;top:332.98px;font-size:6.8px;color:#111111;font-weight:400;transform:scale(0.9671,1.0000);transform-origin:0 5.76px;-webkit-text-stroke:0.15px #111111;">8ms</div>
<div class="t" style="left:579.84px;top:332.98px;font-size:6.8px;color:#111111;font-weight:400;transform:scale(0.9600,1.0000);transform-origin:100% 5.76px;-webkit-text-stroke:0.15px #111111;">64</div>
<div class="t" style="left:598.64px;top:332.98px;font-size:6.8px;color:#111111;font-weight:400;transform:scale(0.9600,1.0000);transform-origin:100% 5.76px;-webkit-text-stroke:0.15px #111111;">64</div>
<div class="t" style="left:434.76px;top:341.18px;font-size:6.8px;color:#111111;font-weight:400;transform:scale(1.0047,1.0000);transform-origin:100% 5.76px;-webkit-text-stroke:0.15px #111111;">116</div>
<div class="t" style="left:448.60px;top:341.18px;font-size:6.8px;color:#111111;font-weight:400;transform:scale(0.8795,1.0000);transform-origin:0 5.76px;-webkit-text-stroke:0.15px #111111;">172.18.0.25</div>
<div class="t" style="left:530.60px;top:341.18px;font-size:6.8px;color:#111111;font-weight:400;transform:scale(0.9671,1.0000);transform-origin:0 5.76px;-webkit-text-stroke:0.15px #111111;">8ms</div>
<div class="t" style="left:579.84px;top:341.18px;font-size:6.8px;color:#111111;font-weight:400;transform:scale(0.9600,1.0000);transform-origin:100% 5.76px;-webkit-text-stroke:0.15px #111111;">64</div>
<div class="t" style="left:598.64px;top:341.18px;font-size:6.8px;color:#111111;font-weight:400;transform:scale(0.9600,1.0000);transform-origin:100% 5.76px;-webkit-text-stroke:0.15px #111111;">64</div>
<div class="t" style="left:434.76px;top:349.38px;font-size:6.8px;color:#111111;font-weight:400;transform:scale(1.0047,1.0000);transform-origin:100% 5.76px;-webkit-text-stroke:0.15px #111111;">117</div>
<div class="t" style="left:448.60px;top:349.38px;font-size:6.8px;color:#111111;font-weight:400;transform:scale(0.8795,1.0000);transform-origin:0 5.76px;-webkit-text-stroke:0.15px #111111;">172.18.0.25</div>
<div class="t" style="left:530.60px;top:349.38px;font-size:6.8px;color:#111111;font-weight:400;transform:scale(0.9655,1.0000);transform-origin:0 5.76px;-webkit-text-stroke:0.15px #111111;">13ms</div>
<div class="t" style="left:579.84px;top:349.38px;font-size:6.8px;color:#111111;font-weight:400;transform:scale(0.9600,1.0000);transform-origin:100% 5.76px;-webkit-text-stroke:0.15px #111111;">64</div>
<div class="t" style="left:598.64px;top:349.38px;font-size:6.8px;color:#111111;font-weight:400;transform:scale(0.9600,1.0000);transform-origin:100% 5.76px;-webkit-text-stroke:0.15px #111111;">64</div>
<div class="t" style="left:434.76px;top:357.58px;font-size:6.8px;color:#111111;font-weight:400;transform:scale(1.0047,1.0000);transform-origin:100% 5.76px;-webkit-text-stroke:0.15px #111111;">118</div>
<div class="t" style="left:448.60px;top:357.58px;font-size:6.8px;color:#111111;font-weight:400;transform:scale(0.8795,1.0000);transform-origin:0 5.76px;-webkit-text-stroke:0.15px #111111;">172.18.0.25</div>
<div class="t" style="left:530.60px;top:357.58px;font-size:6.8px;color:#111111;font-weight:400;transform:scale(0.9655,1.0000);transform-origin:0 5.76px;-webkit-text-stroke:0.15px #111111;">16ms</div>
<div class="t" style="left:579.84px;top:357.58px;font-size:6.8px;color:#111111;font-weight:400;transform:scale(0.9600,1.0000);transform-origin:100% 5.76px;-webkit-text-stroke:0.15px #111111;">64</div>
<div class="t" style="left:598.64px;top:357.58px;font-size:6.8px;color:#111111;font-weight:400;transform:scale(0.9600,1.0000);transform-origin:100% 5.76px;-webkit-text-stroke:0.15px #111111;">64</div>
<div class="t" style="left:434.76px;top:365.78px;font-size:6.8px;color:#111111;font-weight:400;transform:scale(1.0047,1.0000);transform-origin:100% 5.76px;-webkit-text-stroke:0.15px #111111;">119</div>
<div class="t" style="left:448.60px;top:365.78px;font-size:6.8px;color:#111111;font-weight:400;transform:scale(0.8795,1.0000);transform-origin:0 5.76px;-webkit-text-stroke:0.15px #111111;">172.18.0.25</div>
<div class="t" style="left:530.60px;top:365.78px;font-size:6.8px;color:#111111;font-weight:400;transform:scale(0.9655,1.0000);transform-origin:0 5.76px;-webkit-text-stroke:0.15px #111111;">17ms</div>
<div class="t" style="left:579.84px;top:365.78px;font-size:6.8px;color:#111111;font-weight:400;transform:scale(0.9600,1.0000);transform-origin:100% 5.76px;-webkit-text-stroke:0.15px #111111;">64</div>
<div class="t" style="left:598.64px;top:365.78px;font-size:6.8px;color:#111111;font-weight:400;transform:scale(0.9600,1.0000);transform-origin:100% 5.76px;-webkit-text-stroke:0.15px #111111;">64</div>
<div class="t" style="left:434.25px;top:373.98px;font-size:6.8px;color:#111111;font-weight:400;transform:scale(0.9600,1.0000);transform-origin:100% 5.76px;-webkit-text-stroke:0.15px #111111;">120</div>
<div class="t" style="left:448.60px;top:373.98px;font-size:6.8px;color:#111111;font-weight:400;transform:scale(0.8795,1.0000);transform-origin:0 5.76px;-webkit-text-stroke:0.15px #111111;">172.18.0.25</div>
<div class="t" style="left:530.60px;top:373.98px;font-size:6.8px;color:#111111;font-weight:400;transform:scale(0.9671,1.0000);transform-origin:0 5.76px;-webkit-text-stroke:0.15px #111111;">7ms</div>
<div class="t" style="left:579.84px;top:373.98px;font-size:6.8px;color:#111111;font-weight:400;transform:scale(0.9600,1.0000);transform-origin:100% 5.76px;-webkit-text-stroke:0.15px #111111;">64</div>
<div class="t" style="left:598.64px;top:373.98px;font-size:6.8px;color:#111111;font-weight:400;transform:scale(0.9600,1.0000);transform-origin:100% 5.76px;-webkit-text-stroke:0.15px #111111;">64</div>
<div class="t" style="left:434.25px;top:382.18px;font-size:6.8px;color:#111111;font-weight:400;transform:scale(0.9600,1.0000);transform-origin:100% 5.76px;-webkit-text-stroke:0.15px #111111;">121</div>
<div class="t" style="left:448.60px;top:382.18px;font-size:6.8px;color:#111111;font-weight:400;transform:scale(0.8795,1.0000);transform-origin:0 5.76px;-webkit-text-stroke:0.15px #111111;">172.18.0.25</div>
<div class="t" style="left:530.60px;top:382.18px;font-size:6.8px;color:#111111;font-weight:400;transform:scale(0.9671,1.0000);transform-origin:0 5.76px;-webkit-text-stroke:0.15px #111111;">5ms</div>
<div class="t" style="left:579.84px;top:382.18px;font-size:6.8px;color:#111111;font-weight:400;transform:scale(0.9600,1.0000);transform-origin:100% 5.76px;-webkit-text-stroke:0.15px #111111;">64</div>
<div class="t" style="left:598.64px;top:382.18px;font-size:6.8px;color:#111111;font-weight:400;transform:scale(0.9600,1.0000);transform-origin:100% 5.76px;-webkit-text-stroke:0.15px #111111;">64</div>
<div class="t" style="left:434.25px;top:390.38px;font-size:6.8px;color:#111111;font-weight:400;transform:scale(0.9600,1.0000);transform-origin:100% 5.76px;-webkit-text-stroke:0.15px #111111;">122</div>
<div class="t" style="left:448.60px;top:390.38px;font-size:6.8px;color:#111111;font-weight:400;transform:scale(0.8795,1.0000);transform-origin:0 5.76px;-webkit-text-stroke:0.15px #111111;">172.18.0.25</div>
<div class="t" style="left:530.60px;top:390.38px;font-size:6.8px;color:#111111;font-weight:400;transform:scale(0.9655,1.0000);transform-origin:0 5.76px;-webkit-text-stroke:0.15px #111111;">14ms</div>
<div class="t" style="left:579.84px;top:390.38px;font-size:6.8px;color:#111111;font-weight:400;transform:scale(0.9600,1.0000);transform-origin:100% 5.76px;-webkit-text-stroke:0.15px #111111;">64</div>
<div class="t" style="left:598.64px;top:390.38px;font-size:6.8px;color:#111111;font-weight:400;transform:scale(0.9600,1.0000);transform-origin:100% 5.76px;-webkit-text-stroke:0.15px #111111;">64</div>
<div class="t" style="left:434.25px;top:398.58px;font-size:6.8px;color:#111111;font-weight:400;transform:scale(0.9600,1.0000);transform-origin:100% 5.76px;-webkit-text-stroke:0.15px #111111;">123</div>
<div class="t" style="left:448.60px;top:398.58px;font-size:6.8px;color:#111111;font-weight:400;transform:scale(0.8795,1.0000);transform-origin:0 5.76px;-webkit-text-stroke:0.15px #111111;">172.18.0.25</div>
<div class="t" style="left:530.60px;top:398.58px;font-size:6.8px;color:#111111;font-weight:400;transform:scale(0.9671,1.0000);transform-origin:0 5.76px;-webkit-text-stroke:0.15px #111111;">6ms</div>
<div class="t" style="left:579.84px;top:398.58px;font-size:6.8px;color:#111111;font-weight:400;transform:scale(0.9600,1.0000);transform-origin:100% 5.76px;-webkit-text-stroke:0.15px #111111;">64</div>
<div class="t" style="left:598.64px;top:398.58px;font-size:6.8px;color:#111111;font-weight:400;transform:scale(0.9600,1.0000);transform-origin:100% 5.76px;-webkit-text-stroke:0.15px #111111;">64</div>
<div class="t" style="left:434.25px;top:406.78px;font-size:6.8px;color:#111111;font-weight:400;transform:scale(0.9600,1.0000);transform-origin:100% 5.76px;-webkit-text-stroke:0.15px #111111;">124</div>
<div class="t" style="left:448.60px;top:406.78px;font-size:6.8px;color:#111111;font-weight:400;transform:scale(0.8795,1.0000);transform-origin:0 5.76px;-webkit-text-stroke:0.15px #111111;">172.18.0.25</div>
<div class="t" style="left:530.60px;top:406.78px;font-size:6.8px;color:#111111;font-weight:400;transform:scale(0.9671,1.0000);transform-origin:0 5.76px;-webkit-text-stroke:0.15px #111111;">8ms</div>
<div class="t" style="left:579.84px;top:406.78px;font-size:6.8px;color:#111111;font-weight:400;transform:scale(0.9600,1.0000);transform-origin:100% 5.76px;-webkit-text-stroke:0.15px #111111;">64</div>
<div class="t" style="left:598.64px;top:406.78px;font-size:6.8px;color:#111111;font-weight:400;transform:scale(0.9600,1.0000);transform-origin:100% 5.76px;-webkit-text-stroke:0.15px #111111;">64</div>
<div class="t" style="left:434.25px;top:414.98px;font-size:6.8px;color:#111111;font-weight:400;transform:scale(0.9600,1.0000);transform-origin:100% 5.76px;-webkit-text-stroke:0.15px #111111;">125</div>
<div class="t" style="left:448.60px;top:414.98px;font-size:6.8px;color:#111111;font-weight:400;transform:scale(0.8795,1.0000);transform-origin:0 5.76px;-webkit-text-stroke:0.15px #111111;">172.18.0.25</div>
<div class="t" style="left:530.60px;top:414.98px;font-size:6.8px;color:#111111;font-weight:400;transform:scale(0.9655,1.0000);transform-origin:0 5.76px;-webkit-text-stroke:0.15px #111111;">15ms</div>
<div class="t" style="left:579.84px;top:414.98px;font-size:6.8px;color:#111111;font-weight:400;transform:scale(0.9600,1.0000);transform-origin:100% 5.76px;-webkit-text-stroke:0.15px #111111;">64</div>
<div class="t" style="left:598.64px;top:414.98px;font-size:6.8px;color:#111111;font-weight:400;transform:scale(0.9600,1.0000);transform-origin:100% 5.76px;-webkit-text-stroke:0.15px #111111;">64</div>
<div class="t" style="left:434.25px;top:423.18px;font-size:6.8px;color:#111111;font-weight:400;transform:scale(0.9600,1.0000);transform-origin:100% 5.76px;-webkit-text-stroke:0.15px #111111;">126</div>
<div class="t" style="left:448.60px;top:423.18px;font-size:6.8px;color:#111111;font-weight:400;transform:scale(0.8795,1.0000);transform-origin:0 5.76px;-webkit-text-stroke:0.15px #111111;">172.18.0.25</div>
<div class="t" style="left:530.60px;top:423.18px;font-size:6.8px;color:#111111;font-weight:400;transform:scale(0.9671,1.0000);transform-origin:0 5.76px;-webkit-text-stroke:0.15px #111111;">9ms</div>
<div class="t" style="left:579.84px;top:423.18px;font-size:6.8px;color:#111111;font-weight:400;transform:scale(0.9600,1.0000);transform-origin:100% 5.76px;-webkit-text-stroke:0.15px #111111;">64</div>
<div class="t" style="left:598.64px;top:423.18px;font-size:6.8px;color:#111111;font-weight:400;transform:scale(0.9600,1.0000);transform-origin:100% 5.76px;-webkit-text-stroke:0.15px #111111;">64</div>
<div class="t" style="left:434.25px;top:431.38px;font-size:6.8px;color:#111111;font-weight:400;transform:scale(0.9600,1.0000);transform-origin:100% 5.76px;-webkit-text-stroke:0.15px #111111;">127</div>
<div class="t" style="left:448.60px;top:431.38px;font-size:6.8px;color:#111111;font-weight:400;transform:scale(0.8795,1.0000);transform-origin:0 5.76px;-webkit-text-stroke:0.15px #111111;">172.18.0.25</div>
<div class="t" style="left:530.60px;top:431.38px;font-size:6.8px;color:#111111;font-weight:400;transform:scale(0.9671,1.0000);transform-origin:0 5.76px;-webkit-text-stroke:0.15px #111111;">5ms</div>
<div class="t" style="left:579.84px;top:431.38px;font-size:6.8px;color:#111111;font-weight:400;transform:scale(0.9600,1.0000);transform-origin:100% 5.76px;-webkit-text-stroke:0.15px #111111;">64</div>
<div class="t" style="left:598.64px;top:431.38px;font-size:6.8px;color:#111111;font-weight:400;transform:scale(0.9600,1.0000);transform-origin:100% 5.76px;-webkit-text-stroke:0.15px #111111;">64</div>
<div class="t" style="left:434.25px;top:439.58px;font-size:6.8px;color:#111111;font-weight:400;transform:scale(0.9600,1.0000);transform-origin:100% 5.76px;-webkit-text-stroke:0.15px #111111;">128</div>
<div class="t" style="left:448.60px;top:439.58px;font-size:6.8px;color:#111111;font-weight:400;transform:scale(0.8795,1.0000);transform-origin:0 5.76px;-webkit-text-stroke:0.15px #111111;">172.18.0.25</div>
<div class="t" style="left:530.60px;top:439.58px;font-size:6.8px;color:#111111;font-weight:400;transform:scale(0.9671,1.0000);transform-origin:0 5.76px;-webkit-text-stroke:0.15px #111111;">9ms</div>
<div class="t" style="left:579.84px;top:439.58px;font-size:6.8px;color:#111111;font-weight:400;transform:scale(0.9600,1.0000);transform-origin:100% 5.76px;-webkit-text-stroke:0.15px #111111;">64</div>
<div class="t" style="left:598.64px;top:439.58px;font-size:6.8px;color:#111111;font-weight:400;transform:scale(0.9600,1.0000);transform-origin:100% 5.76px;-webkit-text-stroke:0.15px #111111;">64</div>
<div class="t" style="left:434.25px;top:447.78px;font-size:6.8px;color:#111111;font-weight:400;transform:scale(0.9600,1.0000);transform-origin:100% 5.76px;-webkit-text-stroke:0.15px #111111;">129</div>
<div class="t" style="left:448.60px;top:447.78px;font-size:6.8px;color:#111111;font-weight:400;transform:scale(0.8795,1.0000);transform-origin:0 5.76px;-webkit-text-stroke:0.15px #111111;">172.18.0.25</div>
<div class="t" style="left:530.60px;top:447.78px;font-size:6.8px;color:#111111;font-weight:400;transform:scale(0.9671,1.0000);transform-origin:0 5.76px;-webkit-text-stroke:0.15px #111111;">9ms</div>
<div class="t" style="left:579.84px;top:447.78px;font-size:6.8px;color:#111111;font-weight:400;transform:scale(0.9600,1.0000);transform-origin:100% 5.76px;-webkit-text-stroke:0.15px #111111;">64</div>
<div class="t" style="left:598.64px;top:447.78px;font-size:6.8px;color:#111111;font-weight:400;transform:scale(0.9600,1.0000);transform-origin:100% 5.76px;-webkit-text-stroke:0.15px #111111;">64</div>
<div class="t" style="left:434.25px;top:455.98px;font-size:6.8px;color:#111111;font-weight:400;transform:scale(0.9600,1.0000);transform-origin:100% 5.76px;-webkit-text-stroke:0.15px #111111;">130</div>
<div class="t" style="left:448.60px;top:455.98px;font-size:6.8px;color:#111111;font-weight:400;transform:scale(0.8795,1.0000);transform-origin:0 5.76px;-webkit-text-stroke:0.15px #111111;">172.18.0.25</div>
<div class="t" style="left:530.60px;top:455.98px;font-size:6.8px;color:#111111;font-weight:400;transform:scale(0.9671,1.0000);transform-origin:0 5.76px;-webkit-text-stroke:0.15px #111111;">9ms</div>
<div class="t" style="left:579.84px;top:455.98px;font-size:6.8px;color:#111111;font-weight:400;transform:scale(0.9600,1.0000);transform-origin:100% 5.76px;-webkit-text-stroke:0.15px #111111;">64</div>
<div class="t" style="left:598.64px;top:455.98px;font-size:6.8px;color:#111111;font-weight:400;transform:scale(0.9600,1.0000);transform-origin:100% 5.76px;-webkit-text-stroke:0.15px #111111;">64</div>
<div class="t" style="left:434.25px;top:464.18px;font-size:6.8px;color:#111111;font-weight:400;transform:scale(0.9600,1.0000);transform-origin:100% 5.76px;-webkit-text-stroke:0.15px #111111;">131</div>
<div class="t" style="left:448.60px;top:464.18px;font-size:6.8px;color:#111111;font-weight:400;transform:scale(0.8795,1.0000);transform-origin:0 5.76px;-webkit-text-stroke:0.15px #111111;">172.18.0.25</div>
<div class="t" style="left:530.60px;top:464.18px;font-size:6.8px;color:#111111;font-weight:400;transform:scale(0.9655,1.0000);transform-origin:0 5.76px;-webkit-text-stroke:0.15px #111111;">12ms</div>
<div class="t" style="left:579.84px;top:464.18px;font-size:6.8px;color:#111111;font-weight:400;transform:scale(0.9600,1.0000);transform-origin:100% 5.76px;-webkit-text-stroke:0.15px #111111;">64</div>
<div class="t" style="left:598.64px;top:464.18px;font-size:6.8px;color:#111111;font-weight:400;transform:scale(0.9600,1.0000);transform-origin:100% 5.76px;-webkit-text-stroke:0.15px #111111;">64</div>
<div class="t" style="left:434.25px;top:472.38px;font-size:6.8px;color:#111111;font-weight:400;transform:scale(0.9600,1.0000);transform-origin:100% 5.76px;-webkit-text-stroke:0.15px #111111;">132</div>
<div class="t" style="left:448.60px;top:472.38px;font-size:6.8px;color:#111111;font-weight:400;transform:scale(0.8795,1.0000);transform-origin:0 5.76px;-webkit-text-stroke:0.15px #111111;">172.18.0.25</div>
<div class="t" style="left:530.60px;top:472.38px;font-size:6.8px;color:#111111;font-weight:400;transform:scale(0.9671,1.0000);transform-origin:0 5.76px;-webkit-text-stroke:0.15px #111111;">6ms</div>
<div class="t" style="left:579.84px;top:472.38px;font-size:6.8px;color:#111111;font-weight:400;transform:scale(0.9600,1.0000);transform-origin:100% 5.76px;-webkit-text-stroke:0.15px #111111;">64</div>
<div class="t" style="left:598.64px;top:472.38px;font-size:6.8px;color:#111111;font-weight:400;transform:scale(0.9600,1.0000);transform-origin:100% 5.76px;-webkit-text-stroke:0.15px #111111;">64</div>
<div class="t" style="left:434.25px;top:480.58px;font-size:6.8px;color:#111111;font-weight:400;transform:scale(0.9600,1.0000);transform-origin:100% 5.76px;-webkit-text-stroke:0.15px #111111;">133</div>
<div class="t" style="left:448.60px;top:480.58px;font-size:6.8px;color:#111111;font-weight:400;transform:scale(0.8795,1.0000);transform-origin:0 5.76px;-webkit-text-stroke:0.15px #111111;">172.18.0.25</div>
<div class="t" style="left:530.60px;top:480.58px;font-size:6.8px;color:#111111;font-weight:400;transform:scale(0.9671,1.0000);transform-origin:0 5.76px;-webkit-text-stroke:0.15px #111111;">5ms</div>
<div class="t" style="left:579.84px;top:480.58px;font-size:6.8px;color:#111111;font-weight:400;transform:scale(0.9600,1.0000);transform-origin:100% 5.76px;-webkit-text-stroke:0.15px #111111;">64</div>
<div class="t" style="left:598.64px;top:480.58px;font-size:6.8px;color:#111111;font-weight:400;transform:scale(0.9600,1.0000);transform-origin:100% 5.76px;-webkit-text-stroke:0.15px #111111;">64</div>
<div class="t" style="left:434.25px;top:488.78px;font-size:6.8px;color:#111111;font-weight:400;transform:scale(0.9600,1.0000);transform-origin:100% 5.76px;-webkit-text-stroke:0.15px #111111;">134</div>
<div class="t" style="left:448.60px;top:488.78px;font-size:6.8px;color:#111111;font-weight:400;transform:scale(0.8795,1.0000);transform-origin:0 5.76px;-webkit-text-stroke:0.15px #111111;">172.18.0.25</div>
<div class="t" style="left:530.60px;top:488.78px;font-size:6.8px;color:#111111;font-weight:400;transform:scale(0.9655,1.0000);transform-origin:0 5.76px;-webkit-text-stroke:0.15px #111111;">13ms</div>
<div class="t" style="left:579.84px;top:488.78px;font-size:6.8px;color:#111111;font-weight:400;transform:scale(0.9600,1.0000);transform-origin:100% 5.76px;-webkit-text-stroke:0.15px #111111;">64</div>
<div class="t" style="left:598.64px;top:488.78px;font-size:6.8px;color:#111111;font-weight:400;transform:scale(0.9600,1.0000);transform-origin:100% 5.76px;-webkit-text-stroke:0.15px #111111;">64</div>
<div class="r" style="left:668.6px;top:291.6px;width:108px;height:15px;background:#d5d1c9;"></div>
<div class="r" style="left:668px;top:292.2px;width:53.8px;height:1.8px;background:#c2beb6;"></div>
<div class="r" style="left:668.6px;top:297.6px;width:97.6px;height:9px;background:#d5d1c9;border-top:1px solid #ebe8e2;border-bottom:1px solid #b8b4ac;box-sizing:border-box;"></div>
<div class="r" style="left:766.2px;top:297.6px;width:7.4px;height:9px;background:#d5d1c9;border:0.8px solid #ebe8e2;border-right-color:#a8a49c;border-bottom-color:#a8a49c;box-sizing:border-box;"></div>
<svg class="r" style="left:767.5px;top:300px" width="5" height="4" viewBox="0 0 5 4"><path d="M0.3 0.6 H4.7 L2.5 3.2Z" fill="#111"/></svg>
<div class="r" style="left:766.2px;top:306.6px;width:7.6px;height:183.4px;background:#c5c1b9;"></div>
<div class="r" style="left:766.2px;top:306.6px;width:7.4px;height:9px;background:#d5d1c9;border:0.8px solid #ebe8e2;border-right-color:#a8a49c;border-bottom-color:#a8a49c;box-sizing:border-box;"></div>
<div class="r" style="left:766.2px;top:453.8px;width:7.4px;height:26.5px;background:#dcd8d0;border:0.8px solid #f0ede8;border-right-color:#b0aca4;border-bottom-color:#b0aca4;box-sizing:border-box;"></div>
<div class="r" style="left:766.2px;top:481.7px;width:7.4px;height:8.5px;background:#d5d1c9;border:0.8px solid #ebe8e2;border-right-color:#a8a49c;border-bottom-color:#a8a49c;box-sizing:border-box;"></div>
<svg class="r" style="left:767.5px;top:308.6px" width="5" height="5" viewBox="0 0 5 5"><path d="M2.5 0.2 L4.8 2.5 L2.5 4.8 L0.2 2.5Z" fill="#111"/></svg>
<svg class="r" style="left:767.5px;top:483.4px" width="5" height="5" viewBox="0 0 5 5"><path d="M2.5 0.2 L4.8 2.5 L2.5 4.8 L0.2 2.5Z" fill="#111"/></svg>
<div class="r" style="left:419.4px;top:490px;width:357px;height:12px;background:#d5d1c9;"></div>
<div class="r" style="left:421.5px;top:490.2px;width:354px;height:0.8px;background:#bcb8b0;"></div>
<div class="r" style="left:545.0px;top:491px;width:0.8px;height:11px;background:#b4b0a8;"></div>
<div class="r" style="left:545.8px;top:491px;width:0.6px;height:11px;background:#ece9e4;"></div>
<div class="r" style="left:619.0px;top:491px;width:0.8px;height:11px;background:#b4b0a8;"></div>
<div class="r" style="left:619.8px;top:491px;width:0.6px;height:11px;background:#ece9e4;"></div>
<div class="r" style="left:669.9px;top:491px;width:0.8px;height:11px;background:#b4b0a8;"></div>
<div class="r" style="left:670.6999999999999px;top:491px;width:0.6px;height:11px;background:#ece9e4;"></div>
<div class="r" style="left:720.2px;top:491px;width:0.8px;height:11px;background:#b4b0a8;"></div>
<div class="r" style="left:721.0px;top:491px;width:0.6px;height:11px;background:#ece9e4;"></div>
<div class="r" style="left:0;top:0;width:543px;height:502px;overflow:hidden">
<div class="t" style="left:422.20px;top:494.38px;font-size:6.8px;color:#111111;font-weight:400;transform:scale(0.9660,1.0000);transform-origin:0 5.76px;-webkit-text-stroke:0.15px #111111;">135 items (1 - 135 of 135 packets received</div>
</div>
<div class="t" style="left:546.80px;top:494.38px;font-size:6.8px;color:#111111;font-weight:400;transform:scale(0.8575,1.0000);transform-origin:0 5.76px;-webkit-text-stroke:0.15px #111111;">0% packet loss</div>
<div class="t" style="left:620.80px;top:494.38px;font-size:6.8px;color:#111111;font-weight:400;transform:scale(0.8482,1.0000);transform-origin:0 5.76px;-webkit-text-stroke:0.15px #111111;">Min: 3 ms</div>
<div class="t" style="left:671.40px;top:494.38px;font-size:6.8px;color:#111111;font-weight:400;transform:scale(0.8587,1.0000);transform-origin:0 5.76px;-webkit-text-stroke:0.15px #111111;">Avg: 8 ms</div>
<div class="t" style="left:722.30px;top:494.38px;font-size:6.8px;color:#111111;font-weight:400;transform:scale(0.8667,1.0000);transform-origin:0 5.76px;-webkit-text-stroke:0.15px #111111;">Max: 20 ms</div>
<div class="r" style="left:448px;top:484.8px;width:71.7px;height:20px;background:rgba(50,50,50,0.9);border-radius:3px;"></div>
<svg class="r" style="left:448px;top:484.8px" width="72" height="18" viewBox="0 0 72 18"><path d="M8.4 11.7 H17" stroke="#fff" stroke-width="1.3"/><circle cx="34.8" cy="10.6" r="3.4" stroke="#fff" stroke-width="1.2" fill="none"/><path d="M37.2 13.2 L40 16.3" stroke="#fff" stroke-width="1.4"/><path d="M55 11.7 H63.4 M59.2 7.5 V16" stroke="#fff" stroke-width="1.3"/></svg>
<div class="r" style="left:419.4px;top:0px;width:249.2px;height:306.6px;background:#d5d1c9;"></div>
<div class="r" style="left:419.4px;top:0px;width:1.6px;height:306.6px;background:#c4c0b8;"></div>
<div class="r" style="left:419.4px;top:0px;width:249.2px;height:5.5px;background:#8b8780;"></div>
<div class="t" style="left:422.20px;top:0.11px;font-size:6.8px;color:#c9c5bd;font-weight:400;transform:scale(1.0033,1.0000);transform-origin:0 5.76px;">Interface &lt;ether8-Lebed&gt;</div>
<div class="r" style="left:419.4px;top:5.5px;width:249.2px;height:1px;background:#a8a49c;"></div>
<div class="r" style="left:422.0px;top:9.6px;width:40.39999999999998px;height:10.4px;background:#d0ccc4;border-left:0.7px solid #e4e1db;border-right:0.7px solid #bcb8b0;box-sizing:border-box;"></div>
<div class="t" style="left:422.74px;top:13.08px;font-size:6.8px;color:#111111;font-weight:400;transform:scale(0.9178,1.0000);transform-origin:50% 5.76px;-webkit-text-stroke:0.15px #111111;">Overall Stats</div>
<div class="r" style="left:462.4px;top:9.6px;width:28.200000000000045px;height:10.4px;background:#d0ccc4;border-left:0.7px solid #e4e1db;border-right:0.7px solid #bcb8b0;box-sizing:border-box;"></div>
<div class="t" style="left:463.65px;top:13.08px;font-size:6.8px;color:#111111;font-weight:400;transform:scale(0.8924,1.0000);transform-origin:50% 5.76px;-webkit-text-stroke:0.15px #111111;">Rx Stats</div>
<div class="r" style="left:490.6px;top:9.6px;width:28.199999999999932px;height:10.4px;background:#d0ccc4;border-left:0.7px solid #e4e1db;border-right:0.7px solid #bcb8b0;box-sizing:border-box;"></div>
<div class="t" style="left:492.23px;top:13.08px;font-size:6.8px;color:#111111;font-weight:400;transform:scale(0.8933,1.0000);transform-origin:50% 5.76px;-webkit-text-stroke:0.15px #111111;">Tx Stats</div>
<div class="r" style="left:518.8px;top:9.6px;width:22.600000000000023px;height:10.4px;background:#d0ccc4;border-left:0.7px solid #e4e1db;border-right:0.7px solid #bcb8b0;box-sizing:border-box;"></div>
<div class="t" style="left:520.46px;top:13.08px;font-size:6.8px;color:#111111;font-weight:400;transform:scale(0.9448,1.0000);transform-origin:50% 5.76px;-webkit-text-stroke:0.15px #111111;">Status</div>
<div class="r" style="left:542px;top:8.2px;width:24.6px;height:12.4px;background:#dbd8d1;border-left:0.8px solid #f0ede8;border-right:0.8px solid #aaa69e;border-top:0.8px solid #f0ede8;box-sizing:border-box;"></div>
<div class="t" style="left:545.04px;top:11.98px;font-size:6.8px;color:#111111;font-weight:400;transform:scale(0.9656,1.0000);transform-origin:50% 5.76px;-webkit-text-stroke:0.15px #111111;">Traffic</div>
<div class="r" style="left:567.8px;top:10.2px;width:10.8px;height:9.6px;background:#cdc9c1;border-left:0.8px solid #ebe8e2;border-right:0.8px solid #b0aca4;box-sizing:border-box;"></div>
<div class="t" style="left:570.37px;top:13.28px;font-size:6.8px;color:#888;font-weight:400;transform:scale(0.8400,1.0000);transform-origin:50% 5.76px;-webkit-text-stroke:0.15px #888;">...</div>
<div class="r" style="left:421px;top:20.2px;width:172px;height:0.9px;background:#ece9e4;"></div>
<div class="t" style="left:448.60px;top:27.68px;font-size:6.8px;color:#111111;font-weight:400;transform:scale(0.8462,1.0000);transform-origin:100% 5.76px;-webkit-text-stroke:0.15px #111111;">Tx/Rx Rate:</div>
<div class="r" style="left:488px;top:25.0px;width:49px;height:9.8px;background:#d2cec6;border-top:1px solid #aaa69e;border-left:1px solid #aaa69e;border-bottom:1px solid #ebe8e2;border-right:1px solid #ebe8e2;box-sizing:border-box;"></div>
<div class="t" style="left:489.80px;top:27.68px;font-size:6.8px;color:#111111;font-weight:400;transform:scale(0.8855,1.0000);transform-origin:0 5.76px;-webkit-text-stroke:0.15px #111111;">27.6 Mbps</div>
<div class="t" style="left:539.20px;top:27.68px;font-size:6.8px;color:#111111;font-weight:400;transform:scale(0.8400,1.0000);transform-origin:0 5.76px;-webkit-text-stroke:0.15px #111111;">/</div>
<div class="r" style="left:542.5px;top:25.0px;width:49.2px;height:9.8px;background:#d2cec6;border-top:1px solid #aaa69e;border-left:1px solid #aaa69e;border-bottom:1px solid #ebe8e2;border-right:1px solid #ebe8e2;box-sizing:border-box;"></div>
<div class="t" style="left:544.30px;top:27.68px;font-size:6.8px;color:#111111;font-weight:400;transform:scale(0.8934,1.0000);transform-origin:0 5.76px;-webkit-text-stroke:0.15px #111111;">270.6 Mbps</div>
<div class="t" style="left:425.93px;top:41.08px;font-size:6.8px;color:#111111;font-weight:400;transform:scale(0.8691,1.0000);transform-origin:100% 5.76px;-webkit-text-stroke:0.15px #111111;">Tx/Rx Packet Rate:</div>
<div class="r" style="left:488px;top:38.4px;width:49px;height:9.8px;background:#d2cec6;border-top:1px solid #aaa69e;border-left:1px solid #aaa69e;border-bottom:1px solid #ebe8e2;border-right:1px solid #ebe8e2;box-sizing:border-box;"></div>
<div class="t" style="left:489.80px;top:41.08px;font-size:6.8px;color:#111111;font-weight:400;transform:scale(0.8713,1.0000);transform-origin:0 5.76px;-webkit-text-stroke:0.15px #111111;">13 514 p/s</div>
<div class="t" style="left:539.20px;top:41.08px;font-size:6.8px;color:#111111;font-weight:400;transform:scale(0.8400,1.0000);transform-origin:0 5.76px;-webkit-text-stroke:0.15px #111111;">/</div>
<div class="r" style="left:542.5px;top:38.4px;width:49.2px;height:9.8px;background:#d2cec6;border-top:1px solid #aaa69e;border-left:1px solid #aaa69e;border-bottom:1px solid #ebe8e2;border-right:1px solid #ebe8e2;box-sizing:border-box;"></div>
<div class="t" style="left:544.30px;top:41.08px;font-size:6.8px;color:#111111;font-weight:400;transform:scale(0.8713,1.0000);transform-origin:0 5.76px;-webkit-text-stroke:0.15px #111111;">24 843 p/s</div>
<div class="t" style="left:438.27px;top:60.48px;font-size:6.8px;color:#111111;font-weight:400;transform:scale(0.8400,1.0000);transform-origin:100% 5.76px;-webkit-text-stroke:0.15px #111111;">FP Tx/Rx Rate:</div>
<div class="r" style="left:488px;top:57.8px;width:49px;height:9.8px;background:#d2cec6;border-top:1px solid #aaa69e;border-left:1px solid #aaa69e;border-bottom:1px solid #ebe8e2;border-right:1px solid #ebe8e2;box-sizing:border-box;"></div>
<div class="t" style="left:489.80px;top:60.48px;font-size:6.8px;color:#111111;font-weight:400;transform:scale(0.8855,1.0000);transform-origin:0 5.76px;-webkit-text-stroke:0.15px #111111;">27.2 Mbps</div>
<div class="t" style="left:539.20px;top:60.48px;font-size:6.8px;color:#111111;font-weight:400;transform:scale(0.8400,1.0000);transform-origin:0 5.76px;-webkit-text-stroke:0.15px #111111;">/</div>
<div class="r" style="left:542.5px;top:57.8px;width:49.2px;height:9.8px;background:#d2cec6;border-top:1px solid #aaa69e;border-left:1px solid #aaa69e;border-bottom:1px solid #ebe8e2;border-right:1px solid #ebe8e2;box-sizing:border-box;"></div>
<div class="t" style="left:544.30px;top:60.48px;font-size:6.8px;color:#111111;font-weight:400;transform:scale(0.8934,1.0000);transform-origin:0 5.76px;-webkit-text-stroke:0.15px #111111;">269.2 Mbps</div>
<div class="t" style="left:415.59px;top:73.98px;font-size:6.8px;color:#111111;font-weight:400;transform:scale(0.8599,1.0000);transform-origin:100% 5.76px;-webkit-text-stroke:0.15px #111111;">FP Tx/Rx Packet Rate:</div>
<div class="r" style="left:488px;top:71.3px;width:49px;height:9.8px;background:#d2cec6;border-top:1px solid #aaa69e;border-left:1px solid #aaa69e;border-bottom:1px solid #ebe8e2;border-right:1px solid #ebe8e2;box-sizing:border-box;"></div>
<div class="t" style="left:489.80px;top:73.98px;font-size:6.8px;color:#111111;font-weight:400;transform:scale(0.8713,1.0000);transform-origin:0 5.76px;-webkit-text-stroke:0.15px #111111;">13 541 p/s</div>
<div class="t" style="left:539.20px;top:73.98px;font-size:6.8px;color:#111111;font-weight:400;transform:scale(0.8400,1.0000);transform-origin:0 5.76px;-webkit-text-stroke:0.15px #111111;">/</div>
<div class="r" style="left:542.5px;top:71.3px;width:49.2px;height:9.8px;background:#d2cec6;border-top:1px solid #aaa69e;border-left:1px solid #aaa69e;border-bottom:1px solid #ebe8e2;border-right:1px solid #ebe8e2;box-sizing:border-box;"></div>
<div class="t" style="left:544.30px;top:73.98px;font-size:6.8px;color:#111111;font-weight:400;transform:scale(0.8713,1.0000);transform-origin:0 5.76px;-webkit-text-stroke:0.15px #111111;">24 843 p/s</div>
<div class="t" style="left:445.96px;top:93.08px;font-size:6.8px;color:#111111;font-weight:400;transform:scale(0.8558,1.0000);transform-origin:100% 5.76px;-webkit-text-stroke:0.15px #111111;">Tx/Rx Bytes:</div>
<div class="r" style="left:488px;top:90.4px;width:49px;height:9.8px;background:#d2cec6;border-top:1px solid #aaa69e;border-left:1px solid #aaa69e;border-bottom:1px solid #ebe8e2;border-right:1px solid #ebe8e2;box-sizing:border-box;"></div>
<div class="t" style="left:489.80px;top:93.08px;font-size:6.8px;color:#111111;font-weight:400;transform:scale(0.8714,1.0000);transform-origin:0 5.76px;-webkit-text-stroke:0.15px #111111;">3255.9 GB</div>
<div class="t" style="left:539.20px;top:93.08px;font-size:6.8px;color:#111111;font-weight:400;transform:scale(0.8400,1.0000);transform-origin:0 5.76px;-webkit-text-stroke:0.15px #111111;">/</div>
<div class="r" style="left:542.5px;top:90.4px;width:49.2px;height:9.8px;background:#d2cec6;border-top:1px solid #aaa69e;border-left:1px solid #aaa69e;border-bottom:1px solid #ebe8e2;border-right:1px solid #ebe8e2;box-sizing:border-box;"></div>
<div class="t" style="left:544.30px;top:93.08px;font-size:6.8px;color:#111111;font-weight:400;transform:scale(0.8714,1.0000);transform-origin:0 5.76px;-webkit-text-stroke:0.15px #111111;">3029.0 GB</div>
<div class="t" style="left:438.78px;top:106.88px;font-size:6.8px;color:#111111;font-weight:400;transform:scale(0.8737,1.0000);transform-origin:100% 5.76px;-webkit-text-stroke:0.15px #111111;">Tx/Rx Packets:</div>
<div class="r" style="left:488px;top:104.2px;width:49px;height:9.8px;background:#d2cec6;border-top:1px solid #aaa69e;border-left:1px solid #aaa69e;border-bottom:1px solid #ebe8e2;border-right:1px solid #ebe8e2;box-sizing:border-box;"></div>
<div class="t" style="left:489.80px;top:106.88px;font-size:6.8px;color:#111111;font-weight:400;transform:scale(0.9137,1.0000);transform-origin:0 5.76px;-webkit-text-stroke:0.15px #111111;">5926 091 915</div>
<div class="t" style="left:539.20px;top:106.88px;font-size:6.8px;color:#111111;font-weight:400;transform:scale(0.8400,1.0000);transform-origin:0 5.76px;-webkit-text-stroke:0.15px #111111;">/</div>
<div class="r" style="left:542.5px;top:104.2px;width:49.2px;height:9.8px;background:#d2cec6;border-top:1px solid #aaa69e;border-left:1px solid #aaa69e;border-bottom:1px solid #ebe8e2;border-right:1px solid #ebe8e2;box-sizing:border-box;"></div>
<div class="t" style="left:544.30px;top:106.88px;font-size:6.8px;color:#111111;font-weight:400;transform:scale(0.9137,1.0000);transform-origin:0 5.76px;-webkit-text-stroke:0.15px #111111;">5458 786 370</div>
<div class="t" style="left:444.83px;top:120.28px;font-size:6.8px;color:#111111;font-weight:400;transform:scale(0.8580,1.0000);transform-origin:100% 5.76px;-webkit-text-stroke:0.15px #111111;">Tx/Rx Drops:</div>
<div class="r" style="left:488px;top:117.6px;width:49px;height:9.8px;background:#d2cec6;border-top:1px solid #aaa69e;border-left:1px solid #aaa69e;border-bottom:1px solid #ebe8e2;border-right:1px solid #ebe8e2;box-sizing:border-box;"></div>
<div class="t" style="left:489.80px;top:120.28px;font-size:6.8px;color:#111111;font-weight:400;transform:scale(0.9600,1.0000);transform-origin:0 5.76px;-webkit-text-stroke:0.15px #111111;">0</div>
<div class="t" style="left:539.20px;top:120.28px;font-size:6.8px;color:#111111;font-weight:400;transform:scale(0.8400,1.0000);transform-origin:0 5.76px;-webkit-text-stroke:0.15px #111111;">/</div>
<div class="r" style="left:542.5px;top:117.6px;width:49.2px;height:9.8px;background:#d2cec6;border-top:1px solid #aaa69e;border-left:1px solid #aaa69e;border-bottom:1px solid #ebe8e2;border-right:1px solid #ebe8e2;box-sizing:border-box;"></div>
<div class="t" style="left:544.30px;top:120.28px;font-size:6.8px;color:#111111;font-weight:400;transform:scale(0.9600,1.0000);transform-origin:0 5.76px;-webkit-text-stroke:0.15px #111111;">0</div>
<div class="t" style="left:444.46px;top:134.08px;font-size:6.8px;color:#111111;font-weight:400;transform:scale(0.8601,1.0000);transform-origin:100% 5.76px;-webkit-text-stroke:0.15px #111111;">Tx/Rx Errors:</div>
<div class="r" style="left:488px;top:131.4px;width:49px;height:9.8px;background:#d2cec6;border-top:1px solid #aaa69e;border-left:1px solid #aaa69e;border-bottom:1px solid #ebe8e2;border-right:1px solid #ebe8e2;box-sizing:border-box;"></div>
<div class="t" style="left:489.80px;top:134.08px;font-size:6.8px;color:#111111;font-weight:400;transform:scale(0.9600,1.0000);transform-origin:0 5.76px;-webkit-text-stroke:0.15px #111111;">0</div>
<div class="t" style="left:539.20px;top:134.08px;font-size:6.8px;color:#111111;font-weight:400;transform:scale(0.8400,1.0000);transform-origin:0 5.76px;-webkit-text-stroke:0.15px #111111;">/</div>
<div class="r" style="left:542.5px;top:131.4px;width:49.2px;height:9.8px;background:#d2cec6;border-top:1px solid #aaa69e;border-left:1px solid #aaa69e;border-bottom:1px solid #ebe8e2;border-right:1px solid #ebe8e2;box-sizing:border-box;"></div>
<div class="t" style="left:544.30px;top:134.08px;font-size:6.8px;color:#111111;font-weight:400;transform:scale(0.9600,1.0000);transform-origin:0 5.76px;-webkit-text-stroke:0.15px #111111;">0</div>
<div class="r" style="left:425px;top:53.0px;width:167px;height:0.7px;background:#c6c2ba;"></div>
<div class="r" style="left:425px;top:53.7px;width:167px;height:0.7px;background:#e2dfd9;"></div>
<div class="r" style="left:425px;top:86.0px;width:167px;height:0.7px;background:#c6c2ba;"></div>
<div class="r" style="left:425px;top:86.7px;width:167px;height:0.7px;background:#e2dfd9;"></div>
<div class="r" style="left:424.8px;top:144.6px;width:167.4px;height:69.6px;background:#ffffff;border-top:1px solid #6e6a64;border-left:1px solid #6e6a64;border-right:1px solid #f0ede8;border-bottom:1px solid #f0ede8;box-sizing:border-box;"></div>
<svg class="r" style="left:425.8px;top:145.6px" width="165.4" height="67.6" viewBox="0 0 165.4 67.6"><defs><pattern id="pktraffic" width="1.8" height="10" patternUnits="userSpaceOnUse"><rect width="1.8" height="10" fill="#fcb0b0"/><rect width="0.6" height="10" fill="#f09696"/></pattern><pattern id="putraffic" width="3.6" height="10" patternUnits="userSpaceOnUse"><rect width="3.6" height="10" fill="#a650bc"/><rect width="0.7" height="10" fill="#c868c4"/><rect x="1.8" width="0.7" height="10" fill="#8646b8"/></pattern><pattern id="bltraffic" width="2.4" height="10" patternUnits="userSpaceOnUse"><rect width="2.4" height="10" fill="#b2b2fc"/><rect width="0.7" height="10" fill="#8e8ef2"/></pattern><pattern id="gvtraffic" x="1.5" width="8.35" height="8" patternUnits="userSpaceOnUse"><rect width="0.8" height="8" fill="rgba(120,0,0,0.16)"/></pattern><pattern id="ghtraffic" y="2.6" width="8.35" height="8" patternUnits="userSpaceOnUse"><rect width="8.35" height="0.7" fill="rgba(110,0,0,0.11)"/></pattern></defs><path d="M0 67.6 L0.0 7.9 L1.8 7.9 L1.8 4.4 L3.6 4.4 L3.6 7.0 L5.4 7.0 L5.4 6.0 L7.2 6.0 L7.2 7.8 L9.0 7.8 L9.0 5.7 L10.8 5.7 L10.8 7.7 L12.6 7.7 L12.6 4.8 L14.4 4.8 L14.4 8.0 L16.2 8.0 L16.2 5.8 L18.0 5.8 L18.0 4.9 L19.8 4.9 L19.8 5.5 L21.6 5.5 L21.6 6.6 L23.4 6.6 L23.4 4.3 L25.2 4.3 L25.2 5.7 L27.0 5.7 L27.0 4.2 L28.8 4.2 L28.8 4.5 L30.6 4.5 L30.6 4.8 L32.4 4.8 L32.4 5.1 L34.2 5.1 L34.2 5.2 L36.0 5.2 L36.0 7.2 L37.8 7.2 L37.8 5.8 L39.6 5.8 L39.6 7.5 L41.4 7.5 L41.4 7.6 L43.2 7.6 L43.2 7.6 L45.0 7.6 L45.0 7.8 L46.8 7.8 L46.8 6.4 L48.6 6.4 L48.6 6.8 L50.4 6.8 L50.4 7.5 L52.2 7.5 L52.2 6.3 L54.0 6.3 L54.0 4.7 L55.8 4.7 L55.8 6.2 L57.6 6.2 L57.6 6.2 L59.4 6.2 L59.4 4.9 L61.2 4.9 L61.2 4.6 L63.0 4.6 L63.0 4.9 L64.8 4.9 L64.8 6.9 L66.6 6.9 L66.6 7.3 L68.4 7.3 L68.4 6.7 L70.2 6.7 L70.2 5.8 L72.0 5.8 L72.0 4.3 L73.8 4.3 L73.8 4.2 L75.6 4.2 L75.6 6.7 L77.4 6.7 L77.4 6.2 L79.2 6.2 L79.2 5.9 L81.0 5.9 L81.0 4.9 L82.8 4.9 L82.8 4.7 L84.6 4.7 L84.6 4.9 L86.4 4.9 L86.4 4.7 L88.2 4.7 L88.2 6.5 L90.0 6.5 L90.0 5.4 L91.8 5.4 L91.8 6.3 L93.6 6.3 L93.6 5.8 L95.4 5.8 L95.4 6.3 L97.2 6.3 L97.2 7.0 L99.0 7.0 L99.0 7.2 L100.8 7.2 L100.8 4.8 L102.6 4.8 L102.6 7.8 L104.4 7.8 L104.4 7.4 L106.2 7.4 L106.2 7.3 L108.0 7.3 L108.0 5.9 L109.8 5.9 L109.8 7.8 L111.6 7.8 L111.6 7.3 L113.4 7.3 L113.4 5.1 L115.2 5.1 L115.2 6.8 L117.0 6.8 L117.0 7.4 L118.8 7.4 L118.8 7.1 L120.6 7.1 L120.6 7.6 L122.4 7.6 L122.4 6.2 L124.2 6.2 L124.2 6.8 L126.0 6.8 L126.0 4.5 L127.8 4.5 L127.8 6.7 L129.6 6.7 L129.6 4.8 L131.4 4.8 L131.4 7.0 L133.2 7.0 L133.2 7.6 L135.0 7.6 L135.0 5.6 L136.8 5.6 L136.8 4.5 L138.6 4.5 L138.6 4.4 L140.4 4.4 L140.4 6.2 L142.2 6.2 L142.2 4.8 L144.0 4.8 L144.0 7.0 L145.8 7.0 L145.8 6.5 L147.6 6.5 L147.6 6.1 L149.4 6.1 L149.4 6.8 L151.2 6.8 L151.2 4.8 L153.0 4.8 L153.0 5.9 L154.8 5.9 L154.8 4.4 L156.6 4.4 L156.6 6.3 L158.4 6.3 L158.4 7.2 L160.2 7.2 L160.2 4.8 L162.0 4.8 L162.0 6.8 L163.8 6.8 L163.8 8.0 L165.6 8.0 L165.4 67.6 Z" fill="url(#pktraffic)"/><rect x="0" y="61.099999999999994" width="165.4" height="6.5" fill="url(#putraffic)"/><rect width="165.4" height="67.6" fill="url(#gvtraffic)"/><rect width="165.4" height="67.6" fill="url(#ghtraffic)"/></svg>
<div class="r" style="left:427.2px;top:191.3px;width:56.8px;height:19.8px;background:#ffffff;border:0.8px solid #3a3a3a;box-sizing:border-box;"></div>
<div class="r" style="left:429.4px;top:193.60000000000002px;width:7.0px;height:6.9px;background:#0000ff;border:0.5px solid #333;box-sizing:border-box;"></div>
<div class="t" style="left:438.60px;top:194.68px;font-size:6.8px;color:#111111;font-weight:400;transform:scale(0.8400,1.0000);transform-origin:0 5.76px;-webkit-text-stroke:0.15px #111111;">Tx:</div>
<div class="t" style="left:449.40px;top:194.68px;font-size:6.8px;color:#111111;font-weight:400;transform:scale(0.8855,1.0000);transform-origin:0 5.76px;-webkit-text-stroke:0.15px #111111;">27.6 Mbps</div>
<div class="r" style="left:429.4px;top:202.10000000000002px;width:7.0px;height:6.9px;background:#ff0000;border:0.5px solid #333;box-sizing:border-box;"></div>
<div class="t" style="left:438.60px;top:203.28px;font-size:6.8px;color:#111111;font-weight:400;transform:scale(0.8400,1.0000);transform-origin:0 5.76px;-webkit-text-stroke:0.15px #111111;">Rx:</div>
<div class="t" style="left:449.40px;top:203.28px;font-size:6.8px;color:#111111;font-weight:400;transform:scale(0.8934,1.0000);transform-origin:0 5.76px;-webkit-text-stroke:0.15px #111111;">270.6 Mbps</div>
<div class="r" style="left:424.8px;top:217.0px;width:167.4px;height:69.4px;background:#ffffff;border-top:1px solid #6e6a64;border-left:1px solid #6e6a64;border-right:1px solid #f0ede8;border-bottom:1px solid #f0ede8;box-sizing:border-box;"></div>
<svg class="r" style="left:425.8px;top:218.0px" width="165.4" height="67.4" viewBox="0 0 165.4 67.4"><defs><pattern id="pkpackets" width="1.8" height="10" patternUnits="userSpaceOnUse"><rect width="1.8" height="10" fill="#fcb0b0"/><rect width="0.6" height="10" fill="#f09696"/></pattern><pattern id="pupackets" width="3.6" height="10" patternUnits="userSpaceOnUse"><rect width="3.6" height="10" fill="#a650bc"/><rect width="0.7" height="10" fill="#c868c4"/><rect x="1.8" width="0.7" height="10" fill="#8646b8"/></pattern><pattern id="blpackets" width="2.4" height="10" patternUnits="userSpaceOnUse"><rect width="2.4" height="10" fill="#b2b2fc"/><rect width="0.7" height="10" fill="#8e8ef2"/></pattern><pattern id="gvpackets" x="1.5" width="8.35" height="8" patternUnits="userSpaceOnUse"><rect width="0.8" height="8" fill="rgba(120,0,0,0.16)"/></pattern><pattern id="ghpackets" y="2.6" width="8.35" height="8" patternUnits="userSpaceOnUse"><rect width="8.35" height="0.7" fill="rgba(110,0,0,0.11)"/></pattern></defs><path d="M0 67.4 L0.0 10.4 L1.8 10.4 L1.8 4.4 L3.6 4.4 L3.6 8.7 L5.4 8.7 L5.4 7.1 L7.2 7.1 L7.2 10.1 L9.0 10.1 L9.0 6.6 L10.8 6.6 L10.8 10.0 L12.6 10.0 L12.6 5.0 L14.4 5.0 L14.4 10.5 L16.2 10.5 L16.2 6.7 L18.0 6.7 L18.0 5.2 L19.8 5.2 L19.8 6.2 L21.6 6.2 L21.6 8.1 L23.4 8.1 L23.4 4.2 L25.2 4.2 L25.2 6.5 L27.0 6.5 L27.0 4.1 L28.8 4.1 L28.8 4.5 L30.6 4.5 L30.6 5.1 L32.4 5.1 L32.4 5.5 L34.2 5.5 L34.2 5.8 L36.0 5.8 L36.0 9.1 L37.8 9.1 L37.8 6.7 L39.6 6.7 L39.6 9.6 L41.4 9.6 L41.4 9.8 L43.2 9.8 L43.2 9.8 L45.0 9.8 L45.0 10.2 L46.8 10.2 L46.8 7.7 L48.6 7.7 L48.6 8.4 L50.4 8.4 L50.4 9.7 L52.2 9.7 L52.2 7.5 L54.0 7.5 L54.0 4.9 L55.8 4.9 L55.8 7.4 L57.6 7.4 L57.6 7.4 L59.4 7.4 L59.4 5.2 L61.2 5.2 L61.2 4.6 L63.0 4.6 L63.0 5.2 L64.8 5.2 L64.8 8.5 L66.6 8.5 L66.6 9.3 L68.4 9.3 L68.4 8.3 L70.2 8.3 L70.2 6.8 L72.0 6.8 L72.0 4.2 L73.8 4.2 L73.8 4.0 L75.6 4.0 L75.6 8.3 L77.4 8.3 L77.4 7.4 L79.2 7.4 L79.2 7.0 L81.0 7.0 L81.0 5.1 L82.8 5.1 L82.8 4.8 L84.6 4.8 L84.6 5.2 L86.4 5.2 L86.4 4.8 L88.2 4.8 L88.2 7.9 L90.0 7.9 L90.0 6.0 L91.8 6.0 L91.8 7.6 L93.6 7.6 L93.6 6.8 L95.4 6.8 L95.4 7.6 L97.2 7.6 L97.2 8.8 L99.0 8.8 L99.0 9.1 L100.8 9.1 L100.8 5.0 L102.6 5.0 L102.6 10.2 L104.4 10.2 L104.4 9.5 L106.2 9.5 L106.2 9.3 L108.0 9.3 L108.0 6.9 L109.8 6.9 L109.8 10.2 L111.6 10.2 L111.6 9.3 L113.4 9.3 L113.4 5.6 L115.2 5.6 L115.2 8.5 L117.0 8.5 L117.0 9.5 L118.8 9.5 L118.8 8.9 L120.6 8.9 L120.6 9.8 L122.4 9.8 L122.4 7.4 L124.2 7.4 L124.2 8.4 L126.0 8.4 L126.0 4.5 L127.8 4.5 L127.8 8.3 L129.6 8.3 L129.6 5.0 L131.4 5.0 L131.4 8.7 L133.2 8.7 L133.2 9.9 L135.0 9.9 L135.0 6.4 L136.8 6.4 L136.8 4.5 L138.6 4.5 L138.6 4.3 L140.4 4.3 L140.4 7.4 L142.2 7.4 L142.2 5.0 L144.0 5.0 L144.0 8.8 L145.8 8.8 L145.8 8.0 L147.6 8.0 L147.6 7.3 L149.4 7.3 L149.4 8.4 L151.2 8.4 L151.2 5.0 L153.0 5.0 L153.0 7.0 L154.8 7.0 L154.8 4.3 L156.6 4.3 L156.6 7.6 L158.4 7.6 L158.4 9.2 L160.2 9.2 L160.2 5.0 L162.0 5.0 L162.0 8.5 L163.8 8.5 L163.8 10.5 L165.6 10.5 L165.4 67.4 Z" fill="url(#pkpackets)"/><rect x="0" y="33.400000000000006" width="165.4" height="34" fill="url(#pupackets)"/><rect width="165.4" height="67.4" fill="url(#gvpackets)"/><rect width="165.4" height="67.4" fill="url(#ghpackets)"/></svg>
<div class="r" style="left:426.6px;top:264.4px;width:73.4px;height:20.2px;background:#ffffff;border:0.8px solid #3a3a3a;box-sizing:border-box;"></div>
<div class="r" style="left:428.8px;top:266.7px;width:7.0px;height:6.9px;background:#0000ff;border:0.5px solid #333;box-sizing:border-box;"></div>
<div class="t" style="left:438.00px;top:267.78px;font-size:6.8px;color:#111111;font-weight:400;transform:scale(0.8799,1.0000);transform-origin:0 5.76px;-webkit-text-stroke:0.15px #111111;">Tx Packet:</div>
<div class="t" style="left:470.20px;top:267.78px;font-size:6.8px;color:#111111;font-weight:400;transform:scale(0.8713,1.0000);transform-origin:0 5.76px;-webkit-text-stroke:0.15px #111111;">13 514 p/s</div>
<div class="r" style="left:428.8px;top:275.2px;width:7.0px;height:6.9px;background:#ff0000;border:0.5px solid #333;box-sizing:border-box;"></div>
<div class="t" style="left:438.00px;top:276.38px;font-size:6.8px;color:#111111;font-weight:400;transform:scale(0.8795,1.0000);transform-origin:0 5.76px;-webkit-text-stroke:0.15px #111111;">Rx Packet:</div>
<div class="t" style="left:470.20px;top:276.38px;font-size:6.8px;color:#111111;font-weight:400;transform:scale(0.8713,1.0000);transform-origin:0 5.76px;-webkit-text-stroke:0.15px #111111;">24 843 p/s</div>
<div class="r" style="left:419.4px;top:292.4px;width:249.2px;height:13.2px;background:#d5d1c9;"></div>
<div class="r" style="left:421px;top:292.4px;width:246.6px;height:1.4px;background:#bdb9b1;"></div>
<div class="r" style="left:421px;top:293.8px;width:246.6px;height:11.6px;background:#d2cec6;"></div>
<div class="t" style="left:422.20px;top:296.78px;font-size:6.8px;color:#111111;font-weight:400;transform:scale(0.9700,1.0000);transform-origin:0 5.76px;-webkit-text-stroke:0.15px #111111;">enabled</div>
<div class="r" style="left:483.0px;top:293.4px;width:0.9px;height:11.4px;background:#aeaaa2;"></div>
<div class="r" style="left:483.9px;top:293.4px;width:0.7px;height:11.4px;background:#e6e3dd;"></div>
<div class="t" style="left:484.60px;top:296.78px;font-size:6.8px;color:#111111;font-weight:400;transform:scale(0.9700,1.0000);transform-origin:0 5.76px;-webkit-text-stroke:0.15px #111111;">running</div>
<div class="r" style="left:546.4px;top:293.4px;width:0.9px;height:11.4px;background:#aeaaa2;"></div>
<div class="r" style="left:547.3px;top:293.4px;width:0.7px;height:11.4px;background:#e6e3dd;"></div>
<div class="t" style="left:548.00px;top:296.78px;font-size:6.8px;color:#111111;font-weight:400;transform:scale(0.9700,1.0000);transform-origin:0 5.76px;-webkit-text-stroke:0.15px #111111;">slave</div>
<div class="r" style="left:609.8000000000001px;top:293.4px;width:0.9px;height:11.4px;background:#aeaaa2;"></div>
<div class="r" style="left:610.7px;top:293.4px;width:0.7px;height:11.4px;background:#e6e3dd;"></div>
<div class="t" style="left:611.40px;top:296.78px;font-size:6.8px;color:#111111;font-weight:400;transform:scale(0.9190,1.0000);transform-origin:0 5.76px;-webkit-text-stroke:0.15px #111111;">link ok</div>
<div class="r" style="left:419.4px;top:305.4px;width:249.6px;height:1.2px;background:#4e4b46;"></div>
<div class="r" style="left:667.6px;top:291.6px;width:1.2px;height:15px;background:#4e4b46;"></div>
<div class="r" style="left:593.6px;top:0px;width:183.4px;height:291.6px;background:#d5d1c9;"></div>
<div class="r" style="left:593.4px;top:0px;width:0.8px;height:291.6px;background:#b4b0a8;"></div>
<div class="r" style="left:594.2px;top:0px;width:1.2px;height:291.6px;background:#6a6762;"></div>
<div class="r" style="left:775.2px;top:0px;width:1.2px;height:291.6px;background:#b8b4ac;"></div>
<div class="r" style="left:593.6px;top:290.2px;width:183.4px;height:1.4px;background:#5e5b56;"></div>
<div class="r" style="left:595.2px;top:0px;width:180.4px;height:5.6px;background:#4242aa;"></div>
<div class="r" style="left:595.2px;top:5.6px;width:180.4px;height:0.9px;background:#8a8ad0;"></div>
<div class="t" style="left:598.00px;top:-0.09px;font-size:6.8px;color:#c9c9ee;font-weight:400;transform:scale(0.9647,1.0000);transform-origin:0 5.76px;">Bandwidth Test (Running)</div>
<div class="r" style="left:758.1px;top:-1px;width:7.2px;height:5.3px;background:#d0ccc4;border:0.7px solid #8a8680;box-sizing:border-box;"></div>
<div class="r" style="left:767.6px;top:-1px;width:7.2px;height:5.3px;background:#d0ccc4;border:0.7px solid #8a8680;box-sizing:border-box;"></div>
<svg class="r" style="left:769px;top:-1px" width="5" height="5" viewBox="0 0 5 5"><path d="M2.5 0 L4.5 4.5 L0.5 4.5Z" fill="#222"/></svg>
<div class="r" style="left:760px;top:1.5px;width:3.4px;height:1.8px;background:#f0f0f0;border:0.5px solid #555;box-sizing:border-box;"></div>
<div class="t" style="left:637.28px;top:12.88px;font-size:6.8px;color:#111111;font-weight:400;transform:scale(0.9565,1.0000);transform-origin:100% 5.76px;-webkit-text-stroke:0.15px #111111;">Test To</div>
<div class="r" style="left:661.3px;top:10.4px;width:69.3px;height:9.5px;background:#ffffff;border-top:1px solid #8e8a84;border-left:1px solid #8e8a84;border-bottom:1px solid #ece9e4;border-right:1px solid #ece9e4;box-sizing:border-box;"></div>
<div class="t" style="left:663.10px;top:12.93px;font-size:6.8px;color:#111111;font-weight:400;transform:scale(0.8795,1.0000);transform-origin:0 5.76px;-webkit-text-stroke:0.15px #111111;">172.18.0.25</div>
<div class="r" style="left:740px;top:10.4px;width:32.3px;height:11.9px;background:#d2cec6;border:0.8px solid #a8a49c;box-sizing:border-box;border-radius:1px;"></div>
<div class="t" style="left:749.02px;top:14.43px;font-size:6.8px;color:#111111;font-weight:400;transform:scale(0.9362,1.0000);transform-origin:50% 5.76px;-webkit-text-stroke:0.15px #111111;">Start</div>
<div class="r" style="left:740px;top:24.3px;width:32.3px;height:12.400000000000002px;background:#d2cec6;border:0.9px solid #4a4a4a;box-sizing:border-box;border-radius:1px;"></div>
<div class="t" style="left:749.21px;top:28.58px;font-size:6.8px;color:#111111;font-weight:400;transform:scale(0.9353,1.0000);transform-origin:50% 5.76px;-webkit-text-stroke:0.15px #111111;">Stop</div>
<div class="r" style="left:740px;top:38.6px;width:32.3px;height:11.600000000000001px;background:#d2cec6;border:0.8px solid #a8a49c;box-sizing:border-box;border-radius:1px;"></div>
<div class="t" style="left:747.51px;top:42.48px;font-size:6.8px;color:#111111;font-weight:400;transform:scale(0.9398,1.0000);transform-origin:50% 5.76px;-webkit-text-stroke:0.15px #111111;">Close</div>
<div class="t" style="left:631.86px;top:27.28px;font-size:6.8px;color:#111111;font-weight:400;transform:scale(0.9153,1.0000);transform-origin:100% 5.76px;-webkit-text-stroke:0.15px #111111;">Protocol:</div>
<div class="r" style="left:662.1px;top:26.9px;width:5.2px;height:5.2px;border-radius:50%;background:#fff;border-top:0.7px solid #777;border-left:0.7px solid #777;box-sizing:border-box"></div>
<div class="t" style="left:670.00px;top:27.28px;font-size:6.8px;color:#111111;font-weight:400;transform:scale(0.9700,1.0000);transform-origin:0 5.76px;-webkit-text-stroke:0.15px #111111;">udp</div>
<div class="r" style="left:687.0px;top:26.9px;width:5.2px;height:5.2px;border-radius:50%;background:#fff;border-top:0.7px solid #777;border-left:0.7px solid #777;box-sizing:border-box"></div>
<div class="t" style="left:694.90px;top:27.28px;font-size:6.8px;color:#111111;font-weight:400;transform:scale(0.9700,1.0000);transform-origin:0 5.76px;-webkit-text-stroke:0.15px #111111;">tcp</div>
<div class="r" style="left:688.2px;top:28.1px;width:2.8px;height:2.8px;border-radius:50%;background:#222"></div>
<div class="t" style="left:601.88px;top:41.18px;font-size:6.8px;color:#9c988f;font-weight:400;transform:scale(0.8718,1.0000);transform-origin:100% 5.76px;-webkit-text-stroke:0.15px #9c988f;">Local UDP Tx Size</div>
<div class="r" style="left:661.3px;top:38.2px;width:59.2px;height:9.6px;background:#d2cec6;border-top:1px solid #aaa69e;border-left:1px solid #aaa69e;border-bottom:1px solid #ebe8e2;border-right:1px solid #ebe8e2;box-sizing:border-box;"></div>
<svg class="r" style="left:724px;top:41.5px" width="5" height="3.5" viewBox="0 0 5 3.5"><path d="M0.2 0.3 H4.8 L2.5 3Z" fill="#9c988f"/></svg>
<div class="t" style="left:594.33px;top:55.18px;font-size:6.8px;color:#9c988f;font-weight:400;transform:scale(0.8814,1.0000);transform-origin:100% 5.76px;-webkit-text-stroke:0.15px #9c988f;">Remote UDP Tx Size</div>
<div class="r" style="left:661.3px;top:52.0px;width:59.2px;height:9.7px;background:#d2cec6;border-top:1px solid #aaa69e;border-left:1px solid #aaa69e;border-bottom:1px solid #ebe8e2;border-right:1px solid #ebe8e2;box-sizing:border-box;"></div>
<svg class="r" style="left:724px;top:55.5px" width="5" height="3.5" viewBox="0 0 5 3.5"><path d="M0.2 0.3 H4.8 L2.5 3Z" fill="#9c988f"/></svg>
<div class="t" style="left:631.87px;top:69.08px;font-size:6.8px;color:#111111;font-weight:400;transform:scale(0.9504,1.0000);transform-origin:100% 5.76px;-webkit-text-stroke:0.15px #111111;">Direction</div>
<div class="r" style="left:661.3px;top:66.0px;width:59.2px;height:10px;background:#ffffff;border-top:1px solid #8e8a84;border-left:1px solid #8e8a84;border-bottom:1px solid #ece9e4;border-right:1px solid #ece9e4;box-sizing:border-box;"></div>
<div class="t" style="left:663.10px;top:68.78px;font-size:6.8px;color:#111111;font-weight:400;transform:scale(0.9700,1.0000);transform-origin:0 5.76px;-webkit-text-stroke:0.15px #111111;">send</div>
<div class="r" style="left:722px;top:66.0px;width:9px;height:10px;background:#d2cec6;border-top:0.8px solid #f0ede8;border-left:0.8px solid #f0ede8;border-bottom:0.8px solid #8e8a84;border-right:0.8px solid #8e8a84;box-sizing:border-box;"></div>
<svg class="r" style="left:724.3px;top:68.4px" width="5" height="5" viewBox="0 0 5 5"><path d="M0.6 0.5 H4.4" stroke="#222" stroke-width="0.7"/><path d="M0.6 1.7 H4.4 L2.5 4.4Z" fill="#222"/></svg>
<div class="r" style="left:600px;top:80.4px;width:131px;height:0.7px;background:#c6c2ba;"></div>
<div class="r" style="left:600px;top:81.10000000000001px;width:131px;height:0.7px;background:#e2dfd9;"></div>
<div class="t" style="left:606.15px;top:88.78px;font-size:6.8px;color:#111111;font-weight:400;transform:scale(0.9313,1.0000);transform-origin:100% 5.76px;-webkit-text-stroke:0.15px #111111;">Connection Coun</div>
<div class="r" style="left:661.3px;top:86.0px;width:59.2px;height:10px;background:#ffffff;border-top:1px solid #8e8a84;border-left:1px solid #8e8a84;border-bottom:1px solid #ece9e4;border-right:1px solid #ece9e4;box-sizing:border-box;"></div>
<div class="t" style="left:663.10px;top:88.78px;font-size:6.8px;color:#111111;font-weight:400;transform:scale(0.9600,1.0000);transform-origin:0 5.76px;-webkit-text-stroke:0.15px #111111;">20</div>
<svg class="r" style="left:723.7px;top:88.4px" width="5" height="3.6" viewBox="0 0 5 3.6"><path d="M0.2 3.3 H4.8 L2.5 0.3Z" fill="#111"/></svg>
<div class="t" style="left:611.95px;top:103.08px;font-size:6.8px;color:#111111;font-weight:400;transform:scale(0.9020,1.0000);transform-origin:100% 5.76px;-webkit-text-stroke:0.15px #111111;">Local Tx Speec</div>
<div class="r" style="left:661.3px;top:100.0px;width:46.3px;height:9.6px;background:#ffffff;border-top:1px solid #8e8a84;border-left:1px solid #8e8a84;border-bottom:1px solid #ece9e4;border-right:1px solid #ece9e4;box-sizing:border-box;"></div>
<div class="t" style="left:663.10px;top:102.58px;font-size:6.8px;color:#111111;font-weight:400;transform:scale(0.9185,1.0000);transform-origin:0 5.76px;-webkit-text-stroke:0.15px #111111;">20M</div>
<svg class="r" style="left:711.0px;top:102.7px" width="5" height="3.6" viewBox="0 0 5 3.6"><path d="M0.2 3.3 H4.8 L2.5 0.3Z" fill="#111"/></svg>
<div class="t" style="left:720.50px;top:103.08px;font-size:6.8px;color:#111111;font-weight:400;transform:scale(0.9700,1.0000);transform-origin:0 5.76px;-webkit-text-stroke:0.15px #111111;">bps</div>
<div class="t" style="left:604.40px;top:116.98px;font-size:6.8px;color:#111111;font-weight:400;transform:scale(0.9092,1.0000);transform-origin:100% 5.76px;-webkit-text-stroke:0.15px #111111;">Remote Tx Speec</div>
<div class="r" style="left:661.3px;top:114.0px;width:46.3px;height:9.6px;background:#d2cec6;border-top:1px solid #aaa69e;border-left:1px solid #aaa69e;border-bottom:1px solid #ebe8e2;border-right:1px solid #ebe8e2;box-sizing:border-box;"></div>
<svg class="r" style="left:711.0px;top:117.2px" width="5" height="3.6" viewBox="0 0 5 3.6"><path d="M0.2 0.3 H4.8 L2.5 3.3Z" fill="#111"/></svg>
<div class="t" style="left:720.50px;top:116.98px;font-size:6.8px;color:#111111;font-weight:400;transform:scale(0.9700,1.0000);transform-origin:0 5.76px;-webkit-text-stroke:0.15px #111111;">bps</div>
<div class="r" style="left:661.5px;top:128.4px;width:5.4px;height:5.4px;background:#ffffff;border-top:0.8px solid #777;border-left:0.8px solid #777;box-sizing:border-box;"></div>
<div class="t" style="left:670.80px;top:129.08px;font-size:6.8px;color:#111111;font-weight:400;transform:scale(0.9215,1.0000);transform-origin:0 5.76px;-webkit-text-stroke:0.15px #111111;">Random Data</div>
<div class="r" style="left:600px;top:138.9px;width:131px;height:0.7px;background:#c6c2ba;"></div>
<div class="r" style="left:600px;top:139.6px;width:131px;height:0.7px;background:#e2dfd9;"></div>
<div class="t" style="left:642.45px;top:147.48px;font-size:6.8px;color:#111111;font-weight:400;transform:scale(0.8772,1.0000);transform-origin:100% 5.76px;-webkit-text-stroke:0.15px #111111;">User:</div>
<div class="r" style="left:661.3px;top:144.6px;width:59.2px;height:10px;background:#ffffff;border-top:1px solid #8e8a84;border-left:1px solid #8e8a84;border-bottom:1px solid #ece9e4;border-right:1px solid #ece9e4;box-sizing:border-box;"></div>
<div class="t" style="left:663.10px;top:147.38px;font-size:6.8px;color:#111111;font-weight:400;transform:scale(0.9700,1.0000);transform-origin:0 5.76px;-webkit-text-stroke:0.15px #111111;">alexeyp</div>
<svg class="r" style="left:723.7px;top:147.5px" width="5" height="3.6" viewBox="0 0 5 3.6"><path d="M0.2 3.3 H4.8 L2.5 0.3Z" fill="#111"/></svg>
<div class="t" style="left:626.95px;top:161.48px;font-size:6.8px;color:#111111;font-weight:400;transform:scale(0.9238,1.0000);transform-origin:100% 5.76px;-webkit-text-stroke:0.15px #111111;">Password:</div>
<div class="r" style="left:661.3px;top:158.6px;width:59.2px;height:10px;background:#ffffff;border-top:1px solid #8e8a84;border-left:1px solid #8e8a84;border-bottom:1px solid #ece9e4;border-right:1px solid #ece9e4;box-sizing:border-box;"></div>
<svg class="r" style="left:0;top:0" width="1000" height="502" viewBox="0 0 1000 502"><g stroke="#111" stroke-width="0.75"><path d="M665.20 161.8 V165.4 M663.65 162.7 L666.75 164.5 M663.65 164.5 L666.75 162.7" /><path d="M668.93 161.8 V165.4 M667.38 162.7 L670.48 164.5 M667.38 164.5 L670.48 162.7" /><path d="M672.66 161.8 V165.4 M671.11 162.7 L674.21 164.5 M671.11 164.5 L674.21 162.7" /><path d="M676.39 161.8 V165.4 M674.84 162.7 L677.94 164.5 M674.84 164.5 L677.94 162.7" /><path d="M680.12 161.8 V165.4 M678.57 162.7 L681.67 164.5 M678.57 164.5 L681.67 162.7" /><path d="M683.85 161.8 V165.4 M682.30 162.7 L685.40 164.5 M682.30 164.5 L685.40 162.7" /><path d="M687.58 161.8 V165.4 M686.03 162.7 L689.13 164.5 M686.03 164.5 L689.13 162.7" /><path d="M691.31 161.8 V165.4 M689.76 162.7 L692.86 164.5 M689.76 164.5 L692.86 162.7" /><path d="M695.04 161.8 V165.4 M693.49 162.7 L696.59 164.5 M693.49 164.5 L696.59 162.7" /><path d="M698.77 161.8 V165.4 M697.22 162.7 L700.32 164.5 M697.22 164.5 L700.32 162.7" /><path d="M702.50 161.8 V165.4 M700.95 162.7 L704.05 164.5 M700.95 164.5 L704.05 162.7" /><path d="M706.23 161.8 V165.4 M704.68 162.7 L707.78 164.5 M704.68 164.5 L707.78 162.7" /></g></svg>
<svg class="r" style="left:723.7px;top:161.5px" width="5" height="3.6" viewBox="0 0 5 3.6"><path d="M0.2 3.3 H4.8 L2.5 0.3Z" fill="#111"/></svg>
<div class="r" style="left:600px;top:172.7px;width:131px;height:0.7px;background:#c6c2ba;"></div>
<div class="r" style="left:600px;top:173.39999999999998px;width:131px;height:0.7px;background:#e2dfd9;"></div>
<div class="t" style="left:619.77px;top:180.88px;font-size:6.8px;color:#111111;font-weight:400;transform:scale(0.9219,1.0000);transform-origin:100% 5.76px;-webkit-text-stroke:0.15px #111111;">Lost Packets</div>
<div class="r" style="left:662px;top:178.1px;width:68.3px;height:9.8px;background:#d2cec6;border-top:1px solid #aaa69e;border-left:1px solid #aaa69e;border-bottom:1px solid #ebe8e2;border-right:1px solid #ebe8e2;box-sizing:border-box;"></div>
<div class="t" style="left:663.80px;top:180.78px;font-size:6.8px;color:#111111;font-weight:400;transform:scale(0.9600,1.0000);transform-origin:0 5.76px;-webkit-text-stroke:0.15px #111111;">0</div>
<div class="t" style="left:614.49px;top:194.58px;font-size:6.8px;color:#111111;font-weight:400;transform:scale(0.8695,1.0000);transform-origin:100% 5.76px;-webkit-text-stroke:0.15px #111111;">Tx/Rx Current:</div>
<div class="r" style="left:662px;top:191.8px;width:68.3px;height:9.8px;background:#d2cec6;border-top:1px solid #aaa69e;border-left:1px solid #aaa69e;border-bottom:1px solid #ebe8e2;border-right:1px solid #ebe8e2;box-sizing:border-box;"></div>
<div class="t" style="left:663.80px;top:194.48px;font-size:6.8px;color:#111111;font-weight:400;transform:scale(0.8921,1.0000);transform-origin:0 5.76px;-webkit-text-stroke:0.15px #111111;">20.9 Mbps/1920 bps</div>
<div class="t" style="left:599.48px;top:208.18px;font-size:6.8px;color:#111111;font-weight:400;transform:scale(0.8859,1.0000);transform-origin:100% 5.76px;-webkit-text-stroke:0.15px #111111;">Tx/Rx 10s Average:</div>
<div class="r" style="left:662px;top:205.4px;width:68.3px;height:9.8px;background:#d2cec6;border-top:1px solid #aaa69e;border-left:1px solid #aaa69e;border-bottom:1px solid #ebe8e2;border-right:1px solid #ebe8e2;box-sizing:border-box;"></div>
<div class="t" style="left:663.80px;top:208.08px;font-size:6.8px;color:#111111;font-weight:400;transform:scale(0.8768,1.0000);transform-origin:0 5.76px;-webkit-text-stroke:0.15px #111111;">20.0 Mbps/0 bps</div>
<div class="t" style="left:596.21px;top:221.68px;font-size:6.8px;color:#111111;font-weight:400;transform:scale(0.8981,1.0000);transform-origin:100% 5.76px;-webkit-text-stroke:0.15px #111111;">Tx/Rx Total Average:</div>
<div class="r" style="left:662px;top:218.9px;width:68.3px;height:9.8px;background:#d2cec6;border-top:1px solid #aaa69e;border-left:1px solid #aaa69e;border-bottom:1px solid #ebe8e2;border-right:1px solid #ebe8e2;box-sizing:border-box;"></div>
<div class="t" style="left:663.80px;top:221.58px;font-size:6.8px;color:#111111;font-weight:400;transform:scale(0.8768,1.0000);transform-origin:0 5.76px;-webkit-text-stroke:0.15px #111111;">20.0 Mbps/0 bps</div>
<div class="r" style="left:599.2px;top:232.0px;width:131.1px;height:43.2px;background:#ffffff;border-top:1px solid #6e6a64;border-left:1px solid #6e6a64;border-right:1px solid #f0ede8;border-bottom:1px solid #f0ede8;box-sizing:border-box;"></div>
<svg class="r" style="left:600.2px;top:233.0px" width="129.1" height="41.2" viewBox="0 0 129.1 41.2"><defs><pattern id="pkbt" width="1.8" height="10" patternUnits="userSpaceOnUse"><rect width="1.8" height="10" fill="#fcb0b0"/><rect width="0.6" height="10" fill="#f09696"/></pattern><pattern id="pubt" width="3.6" height="10" patternUnits="userSpaceOnUse"><rect width="3.6" height="10" fill="#a650bc"/><rect width="0.7" height="10" fill="#c868c4"/><rect x="1.8" width="0.7" height="10" fill="#8646b8"/></pattern><pattern id="blbt" width="2.4" height="10" patternUnits="userSpaceOnUse"><rect width="2.4" height="10" fill="#b2b2fc"/><rect width="0.7" height="10" fill="#8e8ef2"/></pattern><pattern id="gvbt" x="1.5" width="8.35" height="8" patternUnits="userSpaceOnUse"><rect width="0.8" height="8" fill="rgba(120,0,0,0.16)"/></pattern><pattern id="ghbt" y="2.6" width="8.35" height="8" patternUnits="userSpaceOnUse"><rect width="8.35" height="0.7" fill="rgba(110,0,0,0.11)"/></pattern></defs><path d="M0 41.2 L0.0 2.4 L2.4 2.4 L2.4 3.0 L4.8 3.0 L4.8 3.3 L7.2 3.3 L7.2 2.0 L9.6 2.0 L9.6 2.9 L12.0 2.9 L12.0 2.8 L14.4 2.8 L14.4 2.7 L16.8 2.7 L16.8 1.6 L19.2 1.6 L19.2 1.5 L21.6 1.5 L21.6 2.2 L24.0 2.2 L24.0 2.9 L26.4 2.9 L26.4 1.9 L28.8 1.9 L28.8 2.4 L31.2 2.4 L31.2 2.0 L33.6 2.0 L33.6 3.1 L36.0 3.1 L36.0 3.3 L38.4 3.3 L38.4 2.2 L40.8 2.2 L40.8 3.4 L43.2 3.4 L43.2 1.5 L45.6 1.5 L45.6 3.0 L48.0 3.0 L48.0 3.2 L50.4 3.2 L50.4 1.7 L52.8 1.7 L52.8 2.8 L55.2 2.8 L55.2 2.5 L57.6 2.5 L57.6 3.3 L60.0 3.3 L60.0 1.8 L62.4 1.8 L62.4 2.5 L64.8 2.5 L64.8 3.2 L67.2 3.2 L67.2 2.7 L69.6 2.7 L69.6 2.0 L72.0 2.0 L72.0 1.6 L74.4 1.6 L74.4 3.3 L76.8 3.3 L76.8 2.3 L79.2 2.3 L79.2 3.4 L81.6 3.4 L81.6 1.7 L84.0 1.7 L84.0 3.0 L86.4 3.0 L86.4 3.0 L88.8 3.0 L88.8 3.2 L91.2 3.2 L91.2 1.4 L93.6 1.4 L93.6 2.1 L96.0 2.1 L96.0 1.5 L98.4 1.5 L98.4 2.9 L100.8 2.9 L100.8 2.1 L103.2 2.1 L103.2 3.3 L105.6 3.3 L105.6 2.1 L108.0 2.1 L108.0 2.9 L110.4 2.9 L110.4 3.1 L112.8 3.1 L112.8 1.9 L115.2 1.9 L115.2 2.5 L117.6 2.5 L117.6 3.3 L120.0 3.3 L120.0 2.5 L122.4 2.5 L122.4 2.1 L124.8 2.1 L124.8 1.9 L127.2 1.9 L127.2 3.0 L129.6 3.0 L129.1 41.2 Z" fill="url(#blbt)"/><path d="M0 40.900000000000006 H129.1" stroke="#f08080" stroke-width="0.6"/><rect width="129.1" height="41.2" fill="url(#gvbt)"/><rect width="129.1" height="41.2" fill="url(#ghbt)"/></svg>
<div class="r" style="left:600.6px;top:252.3px;width:58px;height:20.4px;background:#ffffff;border:0.8px solid #3a3a3a;box-sizing:border-box;"></div>
<div class="r" style="left:602.8000000000001px;top:254.60000000000002px;width:7.0px;height:6.9px;background:#0000ff;border:0.5px solid #333;box-sizing:border-box;"></div>
<div class="t" style="left:612.00px;top:255.68px;font-size:6.8px;color:#111111;font-weight:400;transform:scale(0.8400,1.0000);transform-origin:0 5.76px;-webkit-text-stroke:0.15px #111111;">Tx:</div>
<div class="t" style="left:621.90px;top:255.68px;font-size:6.8px;color:#111111;font-weight:400;transform:scale(0.8855,1.0000);transform-origin:0 5.76px;-webkit-text-stroke:0.15px #111111;">20.9 Mbps</div>
<div class="r" style="left:602.8000000000001px;top:263.1px;width:7.0px;height:6.9px;background:#ff0000;border:0.5px solid #333;box-sizing:border-box;"></div>
<div class="t" style="left:612.00px;top:264.28px;font-size:6.8px;color:#111111;font-weight:400;transform:scale(0.8400,1.0000);transform-origin:0 5.76px;-webkit-text-stroke:0.15px #111111;">Rx:</div>
<div class="t" style="left:621.90px;top:264.28px;font-size:6.8px;color:#111111;font-weight:400;transform:scale(0.9295,1.0000);transform-origin:0 5.76px;-webkit-text-stroke:0.15px #111111;">1920 bps</div>
<div class="r" style="left:595.2px;top:279.2px;width:180.4px;height:10.6px;background:#d2cec6;border-top:0.8px solid #b0aca4;box-sizing:border-box;"></div>
<div class="t" style="left:597.00px;top:282.08px;font-size:6.8px;color:#111111;font-weight:400;transform:scale(0.8661,1.0000);transform-origin:0 5.76px;-webkit-text-stroke:0.15px #111111;">running...</div>
<div class="r" style="left:776.4px;top:0px;width:223.6px;height:502px;background:#302f2b;"></div>
<div class="r" style="left:776.4px;top:0px;width:1.4px;height:502px;background:#262523;"></div>
<div class="r" style="left:776.2px;top:500.2px;width:223.8px;height:1.8px;background:#5a5955;"></div>
<style>.tm{left:778.5px;font-family:"Liberation Mono",monospace;font-size:6.383px;color:#c9c9c0;transform:scaleY(1.12);transform-origin:0 4.89px;-webkit-text-stroke:0.05px #c9c9c0;}</style>
<div class="t tm" style="top:-0.96px"> 24] 766.OO-767.OO sec  2.1O MBytes  17.5 Mbits/sec    O</div>
<div class="t tm" style="top:6.67px"> 13O KBytes</div>
<div class="t tm" style="top:14.31px"> 26] 766.OO-767.OO sec  1.54 MBytes  12.9 Mbits/sec    O</div>
<div class="t tm" style="top:21.95px"> 1O4 KBytes</div>
<div class="t tm" style="top:29.59px"> 28] 766.OO-767.OO sec  1.O5 MBytes  8.77 Mbits/sec    O</div>
<div class="t tm" style="top:37.22px">65.8 KBytes</div>
<div class="t tm" style="top:44.86px"> 3O] 766.OO-767.OO sec  1.36 MBytes  11.4 Mbits/sec    O</div>
<div class="t tm" style="top:52.50px">82.9 KBytes</div>
<div class="t tm" style="top:60.13px"> 32] 766.OO-767.O1 sec  1.48 MBytes  12.4 Mbits/sec    O</div>
<div class="t tm" style="top:67.77px">85.6 KBytes</div>
<div class="t tm" style="top:75.41px"> 34] 766.OO-767.O1 sec  1.85 MBytes  15.5 Mbits/sec    O</div>
<div class="t tm" style="top:83.04px"> 117 KBytes</div>
<div class="t tm" style="top:90.68px"> 36] 766.OO-767.O1 sec  1.42 MBytes  11.9 Mbits/sec    O</div>
<div class="t tm" style="top:98.32px">85.6 KBytes</div>
<div class="t tm" style="top:105.96px"> 38] 766.OO-767.O1 sec  1.48 MBytes  12.4 Mbits/sec    O</div>
<div class="t tm" style="top:113.59px">88.2 KBytes</div>
<div class="t tm" style="top:121.23px"> 4O] 766.OO-767.O1 sec  1.67 MBytes  13.9 Mbits/sec    O</div>
<div class="t tm" style="top:128.87px"> 1O1 KBytes</div>
<div class="t tm" style="top:136.50px"> 42] 766.OO-767.O1 sec  2.38 MBytes  19.9 Mbits/sec    O</div>
<div class="t tm" style="top:144.14px"> 187 KBytes</div>
<div class="t tm" style="top:151.78px">SUM] 766.OO-767.OO sec  31.5 MBytes   263 Mbits/sec    O</div>
<div class="t tm" style="top:167.05px"> - - - - - - - - - - - - - - - - - - - - - - - - - - -</div>
<div class="t tm" style="top:174.69px">  4] 767.OO-768.O1 sec  2.O4 MBytes  17.1 Mbits/sec    O</div>
<div class="t tm" style="top:182.33px"> 128 KBytes</div>
<div class="t tm" style="top:189.96px">  6] 767.OO-768.O1 sec  1.97 MBytes  16.6 Mbits/sec    O</div>
<div class="t tm" style="top:197.60px"> 125 KBytes</div>
<div class="t tm" style="top:205.24px">  8] 767.OO-768.O1 sec  1.67 MBytes  14.O Mbits/sec    O</div>
<div class="t tm" style="top:212.87px"> 1O4 KBytes</div>
<div class="t tm" style="top:220.51px"> 1O] 767.OO-768.O1 sec  1.11 MBytes  9.31 Mbits/sec    O</div>
<div class="t tm" style="top:228.15px">72.4 KBytes</div>
<div class="t tm" style="top:235.78px"> 12] 767.OO-768.O1 sec   948 KBytes  7.76 Mbits/sec    O</div>
<div class="t tm" style="top:243.42px">59.2 KBytes</div>
<div class="t tm" style="top:251.06px"> 14] 767.OO-768.O1 sec  1.11 MBytes  9.31 Mbits/sec    O</div>
<div class="t tm" style="top:258.70px">69.8 KBytes</div>
<div class="t tm" style="top:266.33px"> 16] 767.OO-768.O1 sec  1.6O MBytes  13.5 Mbits/sec    O</div>
<div class="t tm" style="top:273.97px"> 1O1 KBytes</div>
<div class="t tm" style="top:281.61px"> 18] 767.OO-768.O1 sec  2.22 MBytes  18.6 Mbits/sec    O</div>
<div class="t tm" style="top:289.24px"> 146 KBytes</div>
<div class="t tm" style="top:296.88px"> 2O] 767.OO-768.O1 sec  1.O5 MBytes  8.8O Mbits/sec    O</div>
<div class="t tm" style="top:304.52px">67.1 KBytes</div>
<div class="t tm" style="top:312.15px"> 22] 767.OO-768.O1 sec  1.6O MBytes  13.5 Mbits/sec    O</div>
<div class="t tm" style="top:319.79px"> 1O5 KBytes</div>
<div class="t tm" style="top:327.43px"> 24] 767.OO-768.O1 sec  2.O9 MBytes  17.6 Mbits/sec    O</div>
<div class="t tm" style="top:335.07px"> 13O KBytes</div>
<div class="t tm" style="top:342.70px"> 26] 767.OO-768.O1 sec  1.67 MBytes  14.O Mbits/sec    O</div>
<div class="t tm" style="top:350.34px"> 1O4 KBytes</div>
<div class="t tm" style="top:357.98px"> 28] 767.OO-768.O1 sec  1.O5 MBytes  8.8O Mbits/sec    O</div>
<div class="t tm" style="top:365.61px">67.1 KBytes</div>
<div class="t tm" style="top:373.25px"> 3O] 767.OO-768.O1 sec  1.3O MBytes  1O.9 Mbits/sec    O</div>
<div class="t tm" style="top:380.89px">82.9 KBytes</div>
<div class="t tm" style="top:388.52px"> 32] 767.O1-768.O1 sec  1.36 MBytes  11.4 Mbits/sec    O</div>
<div class="t tm" style="top:396.16px">85.6 KBytes</div>
<div class="t tm" style="top:403.80px"> 34] 767.O1-768.O1 sec  1.85 MBytes  15.5 Mbits/sec    O</div>
<div class="t tm" style="top:411.44px"> 117 KBytes</div>
<div class="t tm" style="top:419.07px"> 36] 767.O1-768.O1 sec  1.36 MBytes  11.4 Mbits/sec    O</div>
<div class="t tm" style="top:426.71px">86.9 KBytes</div>
<div class="t tm" style="top:434.35px"> 38] 767.O1-768.O1 sec  1.36 MBytes  11.4 Mbits/sec    O</div>
<div class="t tm" style="top:441.98px">88.2 KBytes</div>
<div class="t tm" style="top:449.62px"> 4O] 767.O1-768.O1 sec  1.6O MBytes  13.5 Mbits/sec    O</div>
<div class="t tm" style="top:457.26px"> 1O1 KBytes</div>
<div class="t tm" style="top:464.89px"> 42] 767.O1-768.O1 sec  2.38 MBytes  19.9 Mbits/sec    O</div>
<div class="t tm" style="top:472.53px"> 187 KBytes</div>
<div class="t tm" style="top:480.17px">SUM] 767.OO-768.O1 sec  31.3 MBytes   263 Mbits/sec    O</div>
<div class="r" style="left:778.0px;top:491.6px;width:3.2px;height:8.6px;border:0.7px solid #b5b5ad;box-sizing:border-box;"></div>
</body></html>
